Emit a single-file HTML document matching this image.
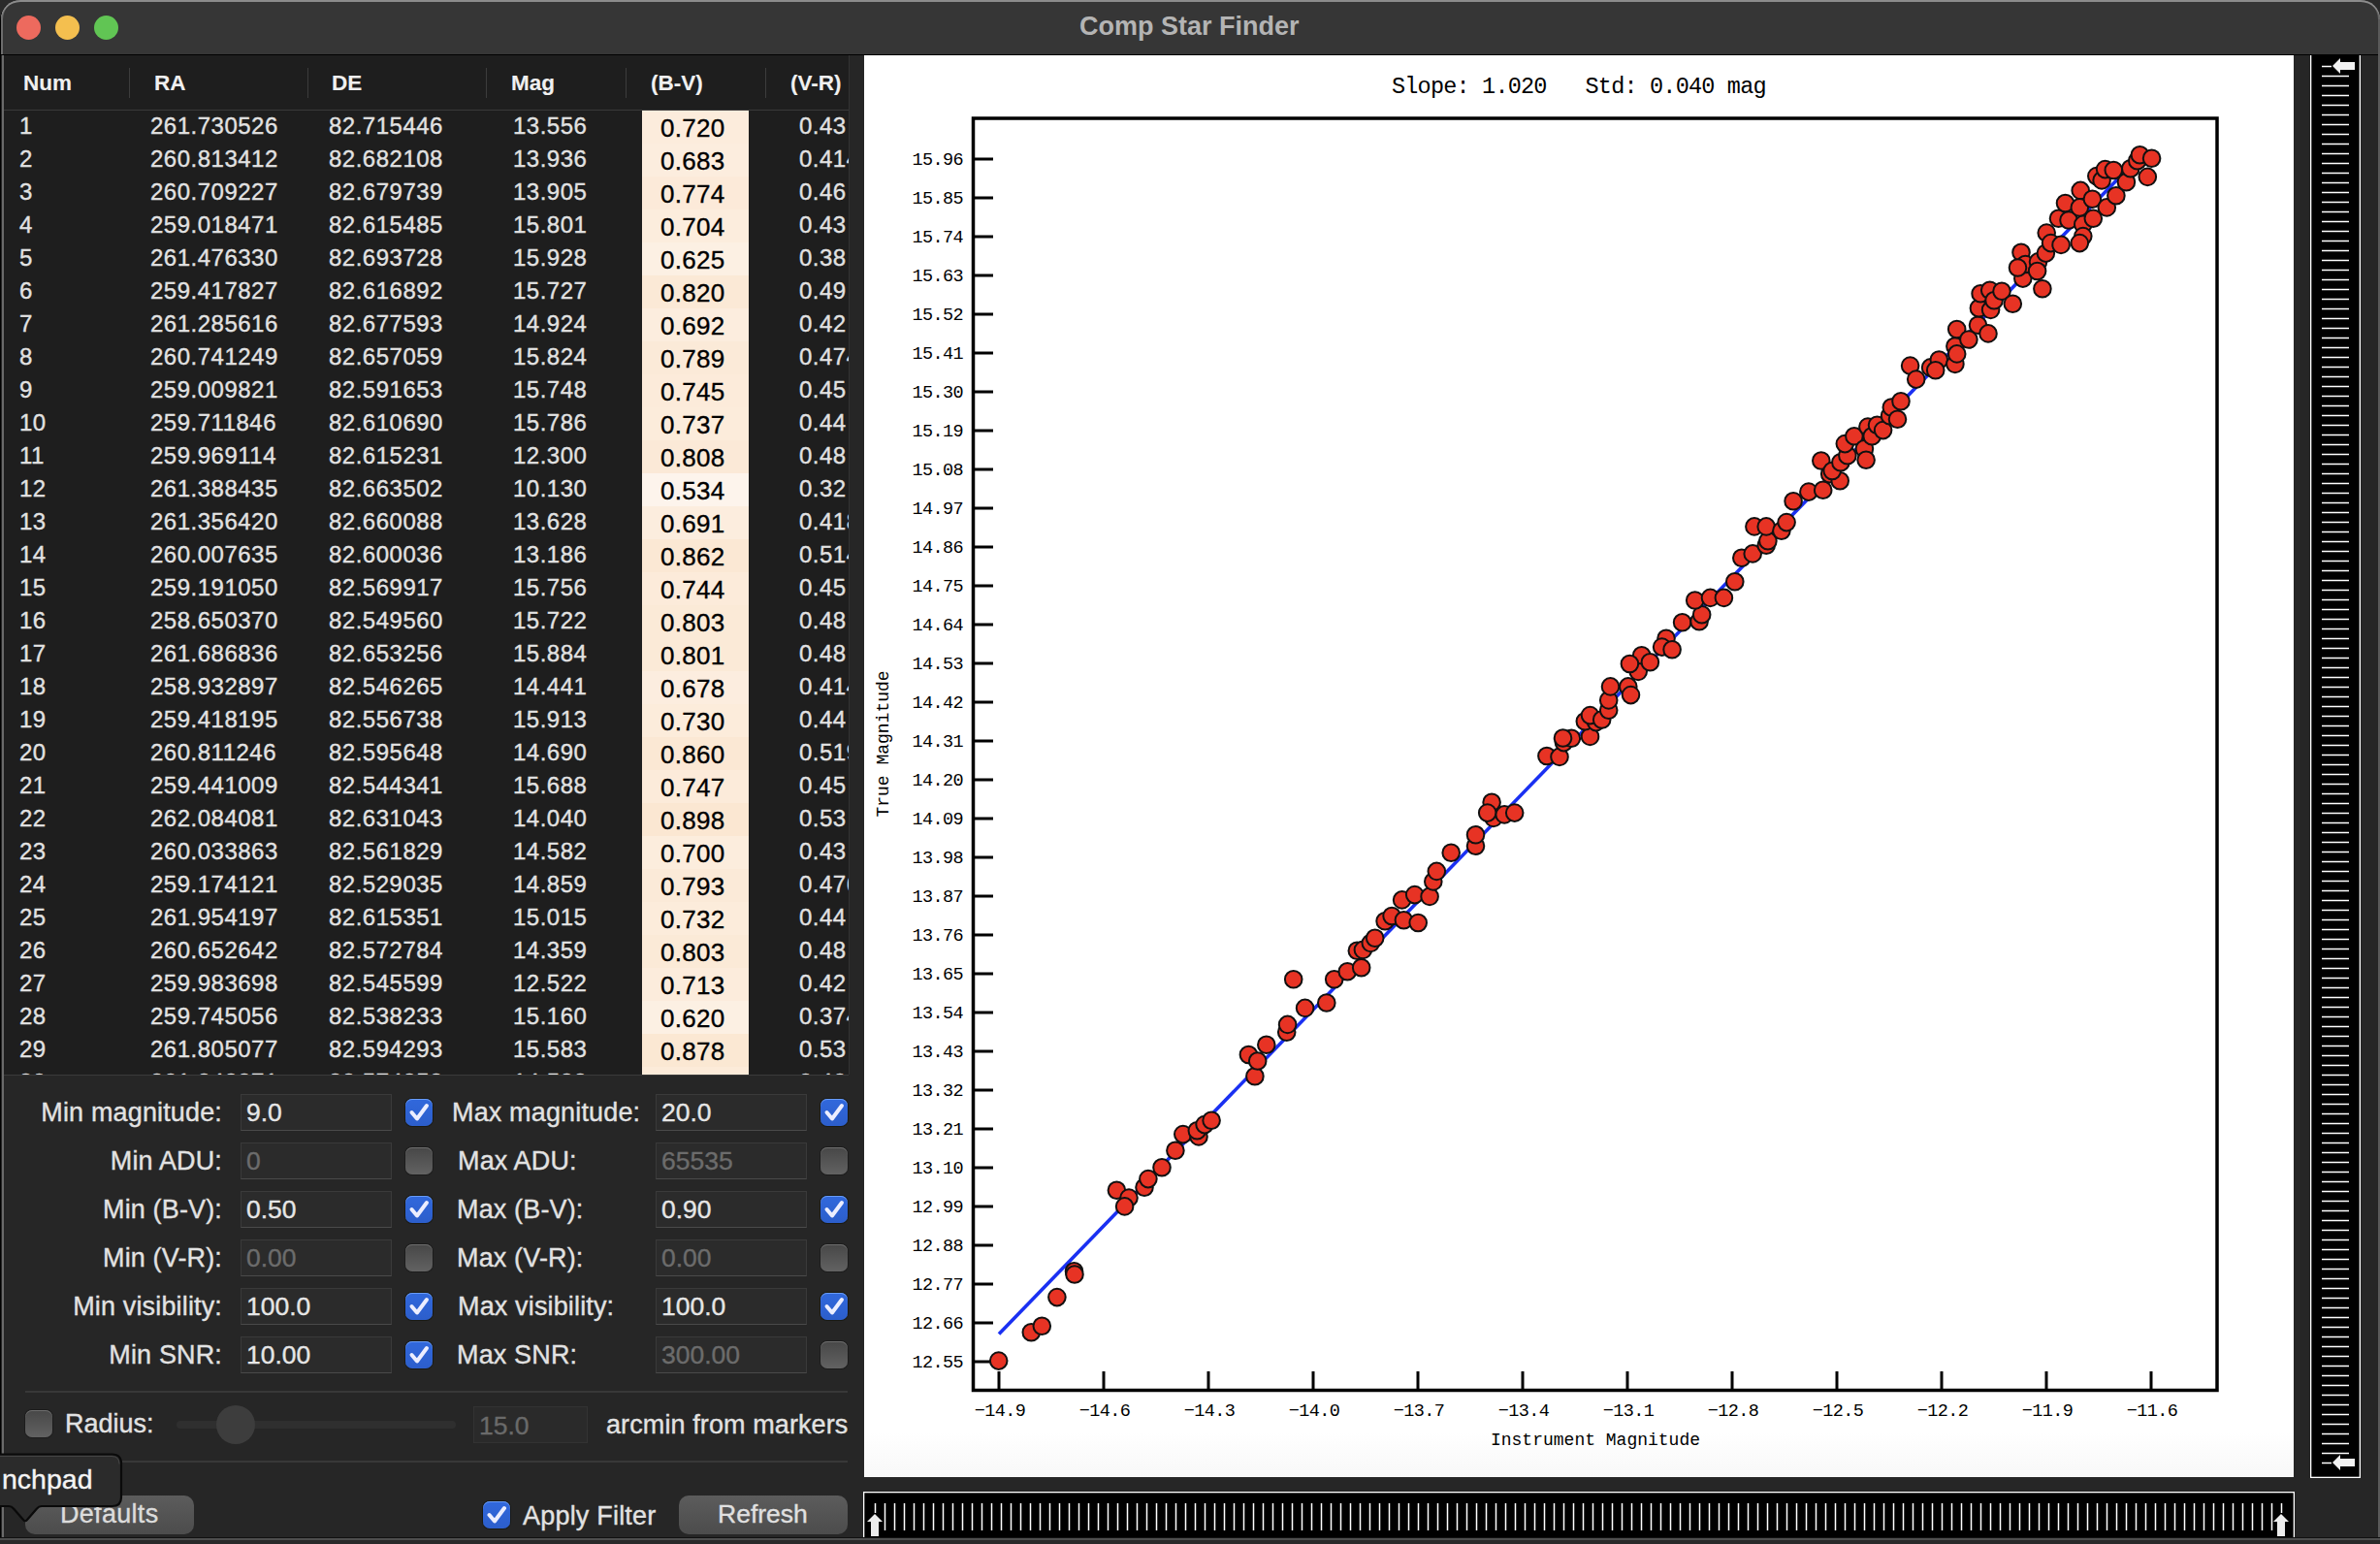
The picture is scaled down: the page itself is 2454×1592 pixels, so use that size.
<!DOCTYPE html><html><head><meta charset="utf-8"><style>
*{margin:0;padding:0;box-sizing:border-box}
html,body{width:2454px;height:1592px;overflow:hidden;background:#2a2a2a}
body{position:relative;font-family:"Liberation Sans",sans-serif}
.a{position:absolute}
.t{position:absolute;white-space:pre;line-height:1}
.m{font-family:"Liberation Mono",monospace}
.t{-webkit-text-stroke:0.35px currentColor}
</style></head><body>

<div class="a" style="left:0;top:0;width:2454px;height:1586px;background:#262626;border-radius:21px 21px 0 0;border:1px solid #000;border-bottom:none;border-right:none"></div>
<div class="a" style="left:1px;top:0;width:2453px;height:56px;background:#363636;border-radius:20px 20px 0 0;box-shadow:inset 0 2px 0 #8c8c8c, inset 2px 0 0 #6c6c6c, inset -2px 0 0 #646464"></div>
<div class="a" style="left:1px;top:56px;width:2453px;height:1px;background:#000"></div>
<div class="a" style="left:2px;top:57px;width:2px;height:1529px;background:#6a6a6a"></div>
<div class="a" style="left:17px;top:16px;width:25px;height:25px;border-radius:50%;background:#ed6a5e"></div>
<div class="a" style="left:57px;top:16px;width:25px;height:25px;border-radius:50%;background:#f4bf4f"></div>
<div class="a" style="left:97px;top:16px;width:25px;height:25px;border-radius:50%;background:#61c554"></div>
<div class="t" style="left:1113px;top:14px;font-size:27px;font-weight:bold;color:#b4b4b4;-webkit-text-stroke:0">Comp Star Finder</div>
<div class="a" style="left:4px;top:57px;width:871px;height:1051px;background:#1e1e1e;overflow:hidden">
<div class="a" style="left:0;top:56px;width:871px;height:1px;background:#3a3a3a"></div>
<div class="a" style="left:129px;top:13px;width:1px;height:31px;background:#3c3c3c"></div>
<div class="a" style="left:313px;top:13px;width:1px;height:31px;background:#3c3c3c"></div>
<div class="a" style="left:497px;top:13px;width:1px;height:31px;background:#3c3c3c"></div>
<div class="a" style="left:641px;top:13px;width:1px;height:31px;background:#3c3c3c"></div>
<div class="a" style="left:785px;top:13px;width:1px;height:31px;background:#3c3c3c"></div>
<div class="t" style="left:20px;top:17.5px;font-size:22.5px;font-weight:bold;color:#f0f0f0;-webkit-text-stroke:0.1px #f0f0f0">Num</div>
<div class="t" style="left:155px;top:17.5px;font-size:22.5px;font-weight:bold;color:#f0f0f0;-webkit-text-stroke:0.1px #f0f0f0">RA</div>
<div class="t" style="left:338px;top:17.5px;font-size:22.5px;font-weight:bold;color:#f0f0f0;-webkit-text-stroke:0.1px #f0f0f0">DE</div>
<div class="t" style="left:523px;top:17.5px;font-size:22.5px;font-weight:bold;color:#f0f0f0;-webkit-text-stroke:0.1px #f0f0f0">Mag</div>
<div class="t" style="left:667px;top:17.5px;font-size:22.5px;font-weight:bold;color:#f0f0f0;-webkit-text-stroke:0.1px #f0f0f0">(B-V)</div>
<div class="t" style="left:811px;top:17.5px;font-size:22.5px;font-weight:bold;color:#f0f0f0;-webkit-text-stroke:0.1px #f0f0f0">(V-R)</div>
<div class="a" style="left:658px;top:57px;width:110px;height:34px;background:rgb(252,236,220)"></div>
<div class="t" style="left:16px;top:61px;font-size:24px;letter-spacing:0.5px;color:#e2e2e2">1</div>
<div class="t" style="left:151px;top:61px;font-size:24px;letter-spacing:0.5px;color:#e2e2e2">261.730526</div>
<div class="t" style="left:335px;top:61px;font-size:24px;letter-spacing:0.5px;color:#e2e2e2">82.715446</div>
<div class="t" style="left:525px;top:61px;font-size:24px;letter-spacing:0.5px;color:#e2e2e2">13.556</div>
<div class="t" style="left:820px;top:61px;font-size:24px;letter-spacing:0.5px;color:#e2e2e2">0.43</div>
<div class="t" style="left:677px;top:62px;font-size:26px;letter-spacing:0.3px;color:#000">0.720</div>
<div class="a" style="left:658px;top:91px;width:110px;height:34px;background:rgb(252,237,222)"></div>
<div class="t" style="left:16px;top:95px;font-size:24px;letter-spacing:0.5px;color:#e2e2e2">2</div>
<div class="t" style="left:151px;top:95px;font-size:24px;letter-spacing:0.5px;color:#e2e2e2">260.813412</div>
<div class="t" style="left:335px;top:95px;font-size:24px;letter-spacing:0.5px;color:#e2e2e2">82.682108</div>
<div class="t" style="left:525px;top:95px;font-size:24px;letter-spacing:0.5px;color:#e2e2e2">13.936</div>
<div class="t" style="left:820px;top:95px;font-size:24px;letter-spacing:0.5px;color:#e2e2e2">0.414</div>
<div class="t" style="left:677px;top:96px;font-size:26px;letter-spacing:0.3px;color:#000">0.683</div>
<div class="a" style="left:658px;top:125px;width:110px;height:34px;background:rgb(252,234,217)"></div>
<div class="t" style="left:16px;top:129px;font-size:24px;letter-spacing:0.5px;color:#e2e2e2">3</div>
<div class="t" style="left:151px;top:129px;font-size:24px;letter-spacing:0.5px;color:#e2e2e2">260.709227</div>
<div class="t" style="left:335px;top:129px;font-size:24px;letter-spacing:0.5px;color:#e2e2e2">82.679739</div>
<div class="t" style="left:525px;top:129px;font-size:24px;letter-spacing:0.5px;color:#e2e2e2">13.905</div>
<div class="t" style="left:820px;top:129px;font-size:24px;letter-spacing:0.5px;color:#e2e2e2">0.46</div>
<div class="t" style="left:677px;top:130px;font-size:26px;letter-spacing:0.3px;color:#000">0.774</div>
<div class="a" style="left:658px;top:159px;width:110px;height:34px;background:rgb(252,237,221)"></div>
<div class="t" style="left:16px;top:163px;font-size:24px;letter-spacing:0.5px;color:#e2e2e2">4</div>
<div class="t" style="left:151px;top:163px;font-size:24px;letter-spacing:0.5px;color:#e2e2e2">259.018471</div>
<div class="t" style="left:335px;top:163px;font-size:24px;letter-spacing:0.5px;color:#e2e2e2">82.615485</div>
<div class="t" style="left:525px;top:163px;font-size:24px;letter-spacing:0.5px;color:#e2e2e2">15.801</div>
<div class="t" style="left:820px;top:163px;font-size:24px;letter-spacing:0.5px;color:#e2e2e2">0.43</div>
<div class="t" style="left:677px;top:164px;font-size:26px;letter-spacing:0.3px;color:#000">0.704</div>
<div class="a" style="left:658px;top:193px;width:110px;height:34px;background:rgb(252,240,227)"></div>
<div class="t" style="left:16px;top:197px;font-size:24px;letter-spacing:0.5px;color:#e2e2e2">5</div>
<div class="t" style="left:151px;top:197px;font-size:24px;letter-spacing:0.5px;color:#e2e2e2">261.476330</div>
<div class="t" style="left:335px;top:197px;font-size:24px;letter-spacing:0.5px;color:#e2e2e2">82.693728</div>
<div class="t" style="left:525px;top:197px;font-size:24px;letter-spacing:0.5px;color:#e2e2e2">15.928</div>
<div class="t" style="left:820px;top:197px;font-size:24px;letter-spacing:0.5px;color:#e2e2e2">0.38</div>
<div class="t" style="left:677px;top:198px;font-size:26px;letter-spacing:0.3px;color:#000">0.625</div>
<div class="a" style="left:658px;top:227px;width:110px;height:34px;background:rgb(251,233,214)"></div>
<div class="t" style="left:16px;top:231px;font-size:24px;letter-spacing:0.5px;color:#e2e2e2">6</div>
<div class="t" style="left:151px;top:231px;font-size:24px;letter-spacing:0.5px;color:#e2e2e2">259.417827</div>
<div class="t" style="left:335px;top:231px;font-size:24px;letter-spacing:0.5px;color:#e2e2e2">82.616892</div>
<div class="t" style="left:525px;top:231px;font-size:24px;letter-spacing:0.5px;color:#e2e2e2">15.727</div>
<div class="t" style="left:820px;top:231px;font-size:24px;letter-spacing:0.5px;color:#e2e2e2">0.49</div>
<div class="t" style="left:677px;top:232px;font-size:26px;letter-spacing:0.3px;color:#000">0.820</div>
<div class="a" style="left:658px;top:261px;width:110px;height:34px;background:rgb(252,237,222)"></div>
<div class="t" style="left:16px;top:265px;font-size:24px;letter-spacing:0.5px;color:#e2e2e2">7</div>
<div class="t" style="left:151px;top:265px;font-size:24px;letter-spacing:0.5px;color:#e2e2e2">261.285616</div>
<div class="t" style="left:335px;top:265px;font-size:24px;letter-spacing:0.5px;color:#e2e2e2">82.677593</div>
<div class="t" style="left:525px;top:265px;font-size:24px;letter-spacing:0.5px;color:#e2e2e2">14.924</div>
<div class="t" style="left:820px;top:265px;font-size:24px;letter-spacing:0.5px;color:#e2e2e2">0.42</div>
<div class="t" style="left:677px;top:266px;font-size:26px;letter-spacing:0.3px;color:#000">0.692</div>
<div class="a" style="left:658px;top:295px;width:110px;height:34px;background:rgb(251,234,216)"></div>
<div class="t" style="left:16px;top:299px;font-size:24px;letter-spacing:0.5px;color:#e2e2e2">8</div>
<div class="t" style="left:151px;top:299px;font-size:24px;letter-spacing:0.5px;color:#e2e2e2">260.741249</div>
<div class="t" style="left:335px;top:299px;font-size:24px;letter-spacing:0.5px;color:#e2e2e2">82.657059</div>
<div class="t" style="left:525px;top:299px;font-size:24px;letter-spacing:0.5px;color:#e2e2e2">15.824</div>
<div class="t" style="left:820px;top:299px;font-size:24px;letter-spacing:0.5px;color:#e2e2e2">0.474</div>
<div class="t" style="left:677px;top:300px;font-size:26px;letter-spacing:0.3px;color:#000">0.789</div>
<div class="a" style="left:658px;top:329px;width:110px;height:34px;background:rgb(252,235,218)"></div>
<div class="t" style="left:16px;top:333px;font-size:24px;letter-spacing:0.5px;color:#e2e2e2">9</div>
<div class="t" style="left:151px;top:333px;font-size:24px;letter-spacing:0.5px;color:#e2e2e2">259.009821</div>
<div class="t" style="left:335px;top:333px;font-size:24px;letter-spacing:0.5px;color:#e2e2e2">82.591653</div>
<div class="t" style="left:525px;top:333px;font-size:24px;letter-spacing:0.5px;color:#e2e2e2">15.748</div>
<div class="t" style="left:820px;top:333px;font-size:24px;letter-spacing:0.5px;color:#e2e2e2">0.45</div>
<div class="t" style="left:677px;top:334px;font-size:26px;letter-spacing:0.3px;color:#000">0.745</div>
<div class="a" style="left:658px;top:363px;width:110px;height:34px;background:rgb(252,236,219)"></div>
<div class="t" style="left:16px;top:367px;font-size:24px;letter-spacing:0.5px;color:#e2e2e2">10</div>
<div class="t" style="left:151px;top:367px;font-size:24px;letter-spacing:0.5px;color:#e2e2e2">259.711846</div>
<div class="t" style="left:335px;top:367px;font-size:24px;letter-spacing:0.5px;color:#e2e2e2">82.610690</div>
<div class="t" style="left:525px;top:367px;font-size:24px;letter-spacing:0.5px;color:#e2e2e2">15.786</div>
<div class="t" style="left:820px;top:367px;font-size:24px;letter-spacing:0.5px;color:#e2e2e2">0.44</div>
<div class="t" style="left:677px;top:368px;font-size:26px;letter-spacing:0.3px;color:#000">0.737</div>
<div class="a" style="left:658px;top:397px;width:110px;height:34px;background:rgb(251,233,215)"></div>
<div class="t" style="left:16px;top:401px;font-size:24px;letter-spacing:0.5px;color:#e2e2e2">11</div>
<div class="t" style="left:151px;top:401px;font-size:24px;letter-spacing:0.5px;color:#e2e2e2">259.969114</div>
<div class="t" style="left:335px;top:401px;font-size:24px;letter-spacing:0.5px;color:#e2e2e2">82.615231</div>
<div class="t" style="left:525px;top:401px;font-size:24px;letter-spacing:0.5px;color:#e2e2e2">12.300</div>
<div class="t" style="left:820px;top:401px;font-size:24px;letter-spacing:0.5px;color:#e2e2e2">0.48</div>
<div class="t" style="left:677px;top:402px;font-size:26px;letter-spacing:0.3px;color:#000">0.808</div>
<div class="a" style="left:658px;top:431px;width:110px;height:34px;background:rgb(253,244,236)"></div>
<div class="t" style="left:16px;top:435px;font-size:24px;letter-spacing:0.5px;color:#e2e2e2">12</div>
<div class="t" style="left:151px;top:435px;font-size:24px;letter-spacing:0.5px;color:#e2e2e2">261.388435</div>
<div class="t" style="left:335px;top:435px;font-size:24px;letter-spacing:0.5px;color:#e2e2e2">82.663502</div>
<div class="t" style="left:525px;top:435px;font-size:24px;letter-spacing:0.5px;color:#e2e2e2">10.130</div>
<div class="t" style="left:820px;top:435px;font-size:24px;letter-spacing:0.5px;color:#e2e2e2">0.32</div>
<div class="t" style="left:677px;top:436px;font-size:26px;letter-spacing:0.3px;color:#000">0.534</div>
<div class="a" style="left:658px;top:465px;width:110px;height:34px;background:rgb(252,237,222)"></div>
<div class="t" style="left:16px;top:469px;font-size:24px;letter-spacing:0.5px;color:#e2e2e2">13</div>
<div class="t" style="left:151px;top:469px;font-size:24px;letter-spacing:0.5px;color:#e2e2e2">261.356420</div>
<div class="t" style="left:335px;top:469px;font-size:24px;letter-spacing:0.5px;color:#e2e2e2">82.660088</div>
<div class="t" style="left:525px;top:469px;font-size:24px;letter-spacing:0.5px;color:#e2e2e2">13.628</div>
<div class="t" style="left:820px;top:469px;font-size:24px;letter-spacing:0.5px;color:#e2e2e2">0.418</div>
<div class="t" style="left:677px;top:470px;font-size:26px;letter-spacing:0.3px;color:#000">0.691</div>
<div class="a" style="left:658px;top:499px;width:110px;height:34px;background:rgb(251,232,212)"></div>
<div class="t" style="left:16px;top:503px;font-size:24px;letter-spacing:0.5px;color:#e2e2e2">14</div>
<div class="t" style="left:151px;top:503px;font-size:24px;letter-spacing:0.5px;color:#e2e2e2">260.007635</div>
<div class="t" style="left:335px;top:503px;font-size:24px;letter-spacing:0.5px;color:#e2e2e2">82.600036</div>
<div class="t" style="left:525px;top:503px;font-size:24px;letter-spacing:0.5px;color:#e2e2e2">13.186</div>
<div class="t" style="left:820px;top:503px;font-size:24px;letter-spacing:0.5px;color:#e2e2e2">0.514</div>
<div class="t" style="left:677px;top:504px;font-size:26px;letter-spacing:0.3px;color:#000">0.862</div>
<div class="a" style="left:658px;top:533px;width:110px;height:34px;background:rgb(252,235,218)"></div>
<div class="t" style="left:16px;top:537px;font-size:24px;letter-spacing:0.5px;color:#e2e2e2">15</div>
<div class="t" style="left:151px;top:537px;font-size:24px;letter-spacing:0.5px;color:#e2e2e2">259.191050</div>
<div class="t" style="left:335px;top:537px;font-size:24px;letter-spacing:0.5px;color:#e2e2e2">82.569917</div>
<div class="t" style="left:525px;top:537px;font-size:24px;letter-spacing:0.5px;color:#e2e2e2">15.756</div>
<div class="t" style="left:820px;top:537px;font-size:24px;letter-spacing:0.5px;color:#e2e2e2">0.45</div>
<div class="t" style="left:677px;top:538px;font-size:26px;letter-spacing:0.3px;color:#000">0.744</div>
<div class="a" style="left:658px;top:567px;width:110px;height:34px;background:rgb(251,234,215)"></div>
<div class="t" style="left:16px;top:571px;font-size:24px;letter-spacing:0.5px;color:#e2e2e2">16</div>
<div class="t" style="left:151px;top:571px;font-size:24px;letter-spacing:0.5px;color:#e2e2e2">258.650370</div>
<div class="t" style="left:335px;top:571px;font-size:24px;letter-spacing:0.5px;color:#e2e2e2">82.549560</div>
<div class="t" style="left:525px;top:571px;font-size:24px;letter-spacing:0.5px;color:#e2e2e2">15.722</div>
<div class="t" style="left:820px;top:571px;font-size:24px;letter-spacing:0.5px;color:#e2e2e2">0.48</div>
<div class="t" style="left:677px;top:572px;font-size:26px;letter-spacing:0.3px;color:#000">0.803</div>
<div class="a" style="left:658px;top:601px;width:110px;height:34px;background:rgb(251,234,215)"></div>
<div class="t" style="left:16px;top:605px;font-size:24px;letter-spacing:0.5px;color:#e2e2e2">17</div>
<div class="t" style="left:151px;top:605px;font-size:24px;letter-spacing:0.5px;color:#e2e2e2">261.686836</div>
<div class="t" style="left:335px;top:605px;font-size:24px;letter-spacing:0.5px;color:#e2e2e2">82.653256</div>
<div class="t" style="left:525px;top:605px;font-size:24px;letter-spacing:0.5px;color:#e2e2e2">15.884</div>
<div class="t" style="left:820px;top:605px;font-size:24px;letter-spacing:0.5px;color:#e2e2e2">0.48</div>
<div class="t" style="left:677px;top:606px;font-size:26px;letter-spacing:0.3px;color:#000">0.801</div>
<div class="a" style="left:658px;top:635px;width:110px;height:34px;background:rgb(252,237,223)"></div>
<div class="t" style="left:16px;top:639px;font-size:24px;letter-spacing:0.5px;color:#e2e2e2">18</div>
<div class="t" style="left:151px;top:639px;font-size:24px;letter-spacing:0.5px;color:#e2e2e2">258.932897</div>
<div class="t" style="left:335px;top:639px;font-size:24px;letter-spacing:0.5px;color:#e2e2e2">82.546265</div>
<div class="t" style="left:525px;top:639px;font-size:24px;letter-spacing:0.5px;color:#e2e2e2">14.441</div>
<div class="t" style="left:820px;top:639px;font-size:24px;letter-spacing:0.5px;color:#e2e2e2">0.414</div>
<div class="t" style="left:677px;top:640px;font-size:26px;letter-spacing:0.3px;color:#000">0.678</div>
<div class="a" style="left:658px;top:669px;width:110px;height:34px;background:rgb(252,236,219)"></div>
<div class="t" style="left:16px;top:673px;font-size:24px;letter-spacing:0.5px;color:#e2e2e2">19</div>
<div class="t" style="left:151px;top:673px;font-size:24px;letter-spacing:0.5px;color:#e2e2e2">259.418195</div>
<div class="t" style="left:335px;top:673px;font-size:24px;letter-spacing:0.5px;color:#e2e2e2">82.556738</div>
<div class="t" style="left:525px;top:673px;font-size:24px;letter-spacing:0.5px;color:#e2e2e2">15.913</div>
<div class="t" style="left:820px;top:673px;font-size:24px;letter-spacing:0.5px;color:#e2e2e2">0.44</div>
<div class="t" style="left:677px;top:674px;font-size:26px;letter-spacing:0.3px;color:#000">0.730</div>
<div class="a" style="left:658px;top:703px;width:110px;height:34px;background:rgb(251,232,212)"></div>
<div class="t" style="left:16px;top:707px;font-size:24px;letter-spacing:0.5px;color:#e2e2e2">20</div>
<div class="t" style="left:151px;top:707px;font-size:24px;letter-spacing:0.5px;color:#e2e2e2">260.811246</div>
<div class="t" style="left:335px;top:707px;font-size:24px;letter-spacing:0.5px;color:#e2e2e2">82.595648</div>
<div class="t" style="left:525px;top:707px;font-size:24px;letter-spacing:0.5px;color:#e2e2e2">14.690</div>
<div class="t" style="left:820px;top:707px;font-size:24px;letter-spacing:0.5px;color:#e2e2e2">0.519</div>
<div class="t" style="left:677px;top:708px;font-size:26px;letter-spacing:0.3px;color:#000">0.860</div>
<div class="a" style="left:658px;top:737px;width:110px;height:34px;background:rgb(252,235,218)"></div>
<div class="t" style="left:16px;top:741px;font-size:24px;letter-spacing:0.5px;color:#e2e2e2">21</div>
<div class="t" style="left:151px;top:741px;font-size:24px;letter-spacing:0.5px;color:#e2e2e2">259.441009</div>
<div class="t" style="left:335px;top:741px;font-size:24px;letter-spacing:0.5px;color:#e2e2e2">82.544341</div>
<div class="t" style="left:525px;top:741px;font-size:24px;letter-spacing:0.5px;color:#e2e2e2">15.688</div>
<div class="t" style="left:820px;top:741px;font-size:24px;letter-spacing:0.5px;color:#e2e2e2">0.45</div>
<div class="t" style="left:677px;top:742px;font-size:26px;letter-spacing:0.3px;color:#000">0.747</div>
<div class="a" style="left:658px;top:771px;width:110px;height:34px;background:rgb(251,231,210)"></div>
<div class="t" style="left:16px;top:775px;font-size:24px;letter-spacing:0.5px;color:#e2e2e2">22</div>
<div class="t" style="left:151px;top:775px;font-size:24px;letter-spacing:0.5px;color:#e2e2e2">262.084081</div>
<div class="t" style="left:335px;top:775px;font-size:24px;letter-spacing:0.5px;color:#e2e2e2">82.631043</div>
<div class="t" style="left:525px;top:775px;font-size:24px;letter-spacing:0.5px;color:#e2e2e2">14.040</div>
<div class="t" style="left:820px;top:775px;font-size:24px;letter-spacing:0.5px;color:#e2e2e2">0.53</div>
<div class="t" style="left:677px;top:776px;font-size:26px;letter-spacing:0.3px;color:#000">0.898</div>
<div class="a" style="left:658px;top:805px;width:110px;height:34px;background:rgb(252,237,221)"></div>
<div class="t" style="left:16px;top:809px;font-size:24px;letter-spacing:0.5px;color:#e2e2e2">23</div>
<div class="t" style="left:151px;top:809px;font-size:24px;letter-spacing:0.5px;color:#e2e2e2">260.033863</div>
<div class="t" style="left:335px;top:809px;font-size:24px;letter-spacing:0.5px;color:#e2e2e2">82.561829</div>
<div class="t" style="left:525px;top:809px;font-size:24px;letter-spacing:0.5px;color:#e2e2e2">14.582</div>
<div class="t" style="left:820px;top:809px;font-size:24px;letter-spacing:0.5px;color:#e2e2e2">0.43</div>
<div class="t" style="left:677px;top:810px;font-size:26px;letter-spacing:0.3px;color:#000">0.700</div>
<div class="a" style="left:658px;top:839px;width:110px;height:34px;background:rgb(251,234,216)"></div>
<div class="t" style="left:16px;top:843px;font-size:24px;letter-spacing:0.5px;color:#e2e2e2">24</div>
<div class="t" style="left:151px;top:843px;font-size:24px;letter-spacing:0.5px;color:#e2e2e2">259.174121</div>
<div class="t" style="left:335px;top:843px;font-size:24px;letter-spacing:0.5px;color:#e2e2e2">82.529035</div>
<div class="t" style="left:525px;top:843px;font-size:24px;letter-spacing:0.5px;color:#e2e2e2">14.859</div>
<div class="t" style="left:820px;top:843px;font-size:24px;letter-spacing:0.5px;color:#e2e2e2">0.476</div>
<div class="t" style="left:677px;top:844px;font-size:26px;letter-spacing:0.3px;color:#000">0.793</div>
<div class="a" style="left:658px;top:873px;width:110px;height:34px;background:rgb(252,236,219)"></div>
<div class="t" style="left:16px;top:877px;font-size:24px;letter-spacing:0.5px;color:#e2e2e2">25</div>
<div class="t" style="left:151px;top:877px;font-size:24px;letter-spacing:0.5px;color:#e2e2e2">261.954197</div>
<div class="t" style="left:335px;top:877px;font-size:24px;letter-spacing:0.5px;color:#e2e2e2">82.615351</div>
<div class="t" style="left:525px;top:877px;font-size:24px;letter-spacing:0.5px;color:#e2e2e2">15.015</div>
<div class="t" style="left:820px;top:877px;font-size:24px;letter-spacing:0.5px;color:#e2e2e2">0.44</div>
<div class="t" style="left:677px;top:878px;font-size:26px;letter-spacing:0.3px;color:#000">0.732</div>
<div class="a" style="left:658px;top:907px;width:110px;height:34px;background:rgb(251,234,215)"></div>
<div class="t" style="left:16px;top:911px;font-size:24px;letter-spacing:0.5px;color:#e2e2e2">26</div>
<div class="t" style="left:151px;top:911px;font-size:24px;letter-spacing:0.5px;color:#e2e2e2">260.652642</div>
<div class="t" style="left:335px;top:911px;font-size:24px;letter-spacing:0.5px;color:#e2e2e2">82.572784</div>
<div class="t" style="left:525px;top:911px;font-size:24px;letter-spacing:0.5px;color:#e2e2e2">14.359</div>
<div class="t" style="left:820px;top:911px;font-size:24px;letter-spacing:0.5px;color:#e2e2e2">0.48</div>
<div class="t" style="left:677px;top:912px;font-size:26px;letter-spacing:0.3px;color:#000">0.803</div>
<div class="a" style="left:658px;top:941px;width:110px;height:34px;background:rgb(252,236,220)"></div>
<div class="t" style="left:16px;top:945px;font-size:24px;letter-spacing:0.5px;color:#e2e2e2">27</div>
<div class="t" style="left:151px;top:945px;font-size:24px;letter-spacing:0.5px;color:#e2e2e2">259.983698</div>
<div class="t" style="left:335px;top:945px;font-size:24px;letter-spacing:0.5px;color:#e2e2e2">82.545599</div>
<div class="t" style="left:525px;top:945px;font-size:24px;letter-spacing:0.5px;color:#e2e2e2">12.522</div>
<div class="t" style="left:820px;top:945px;font-size:24px;letter-spacing:0.5px;color:#e2e2e2">0.42</div>
<div class="t" style="left:677px;top:946px;font-size:26px;letter-spacing:0.3px;color:#000">0.713</div>
<div class="a" style="left:658px;top:975px;width:110px;height:34px;background:rgb(252,240,227)"></div>
<div class="t" style="left:16px;top:979px;font-size:24px;letter-spacing:0.5px;color:#e2e2e2">28</div>
<div class="t" style="left:151px;top:979px;font-size:24px;letter-spacing:0.5px;color:#e2e2e2">259.745056</div>
<div class="t" style="left:335px;top:979px;font-size:24px;letter-spacing:0.5px;color:#e2e2e2">82.538233</div>
<div class="t" style="left:525px;top:979px;font-size:24px;letter-spacing:0.5px;color:#e2e2e2">15.160</div>
<div class="t" style="left:820px;top:979px;font-size:24px;letter-spacing:0.5px;color:#e2e2e2">0.374</div>
<div class="t" style="left:677px;top:980px;font-size:26px;letter-spacing:0.3px;color:#000">0.620</div>
<div class="a" style="left:658px;top:1009px;width:110px;height:34px;background:rgb(251,232,211)"></div>
<div class="t" style="left:16px;top:1013px;font-size:24px;letter-spacing:0.5px;color:#e2e2e2">29</div>
<div class="t" style="left:151px;top:1013px;font-size:24px;letter-spacing:0.5px;color:#e2e2e2">261.805077</div>
<div class="t" style="left:335px;top:1013px;font-size:24px;letter-spacing:0.5px;color:#e2e2e2">82.594293</div>
<div class="t" style="left:525px;top:1013px;font-size:24px;letter-spacing:0.5px;color:#e2e2e2">15.583</div>
<div class="t" style="left:820px;top:1013px;font-size:24px;letter-spacing:0.5px;color:#e2e2e2">0.53</div>
<div class="t" style="left:677px;top:1014px;font-size:26px;letter-spacing:0.3px;color:#000">0.878</div>
<div class="a" style="left:658px;top:1043px;width:110px;height:34px;background:rgb(252,235,217)"></div>
<div class="t" style="left:16px;top:1047px;font-size:24px;letter-spacing:0.5px;color:#e2e2e2">30</div>
<div class="t" style="left:151px;top:1047px;font-size:24px;letter-spacing:0.5px;color:#e2e2e2">261.848871</div>
<div class="t" style="left:335px;top:1047px;font-size:24px;letter-spacing:0.5px;color:#e2e2e2">82.574852</div>
<div class="t" style="left:525px;top:1047px;font-size:24px;letter-spacing:0.5px;color:#e2e2e2">14.532</div>
<div class="t" style="left:820px;top:1047px;font-size:24px;letter-spacing:0.5px;color:#e2e2e2">0.46</div>
<div class="t" style="left:677px;top:1048px;font-size:26px;letter-spacing:0.3px;color:#000">0.766</div>
</div>
<div class="a" style="left:4px;top:1108px;width:871px;height:1px;background:#3a3a3a"></div>
<div class="a" style="left:875px;top:57px;width:1px;height:1051px;background:#333"></div>
<div class="t" style="left:0;width:229px;text-align:right;top:1134px;font-size:27px;letter-spacing:0.15px;color:#e2e2e2">Min magnitude:</div>
<div class="a" style="left:248px;top:1128px;width:156px;height:38px;background:#2b2b2b;border:1px solid #3a3a3a;border-bottom-color:#4a4a4a"></div>
<div class="t" style="left:254px;top:1134px;font-size:26.5px;color:#e6e6e6">9.0</div>
<div class="a" style="left:418px;top:1133px;width:28px;height:28px;border-radius:7px;background:linear-gradient(#3168dc,#2c5ecb);box-shadow:inset 0 1px 0 #6a9cf5, 0 0 0 1px #1a1a14"><svg width="28" height="28" style="position:absolute;left:0;top:0"><path d="M6.5 14 L12 20.5 L22 7" stroke="#eceeff" stroke-width="4" fill="none" stroke-linecap="round" stroke-linejoin="round"/></svg></div>
<div class="t" style="left:466px;top:1134px;font-size:27px;letter-spacing:0.15px;color:#e2e2e2">Max magnitude:</div>
<div class="a" style="left:676px;top:1128px;width:156px;height:38px;background:#2b2b2b;border:1px solid #3a3a3a;border-bottom-color:#4a4a4a"></div>
<div class="t" style="left:682px;top:1134px;font-size:26.5px;color:#e6e6e6">20.0</div>
<div class="a" style="left:846px;top:1133px;width:28px;height:28px;border-radius:7px;background:linear-gradient(#3168dc,#2c5ecb);box-shadow:inset 0 1px 0 #6a9cf5, 0 0 0 1px #1a1a14"><svg width="28" height="28" style="position:absolute;left:0;top:0"><path d="M6.5 14 L12 20.5 L22 7" stroke="#eceeff" stroke-width="4" fill="none" stroke-linecap="round" stroke-linejoin="round"/></svg></div>
<div class="t" style="left:0;width:229px;text-align:right;top:1184px;font-size:27px;letter-spacing:0.15px;color:#e2e2e2">Min ADU:</div>
<div class="a" style="left:248px;top:1178px;width:156px;height:38px;background:#2b2b2b;border:1px solid #3a3a3a;border-bottom-color:#4a4a4a"></div>
<div class="t" style="left:254px;top:1184px;font-size:26.5px;color:#6c6c6c">0</div>
<div class="a" style="left:418px;top:1183px;width:28px;height:28px;border-radius:7px;background:linear-gradient(#474747,#626262);box-shadow:inset 0 1px 0 #6e6e6e, 0 0 0 1px #1c1c1c"></div>
<div class="t" style="left:472px;top:1184px;font-size:27px;letter-spacing:0.15px;color:#e2e2e2">Max ADU:</div>
<div class="a" style="left:676px;top:1178px;width:156px;height:38px;background:#2b2b2b;border:1px solid #3a3a3a;border-bottom-color:#4a4a4a"></div>
<div class="t" style="left:682px;top:1184px;font-size:26.5px;color:#6c6c6c">65535</div>
<div class="a" style="left:846px;top:1183px;width:28px;height:28px;border-radius:7px;background:linear-gradient(#474747,#626262);box-shadow:inset 0 1px 0 #6e6e6e, 0 0 0 1px #1c1c1c"></div>
<div class="t" style="left:0;width:229px;text-align:right;top:1234px;font-size:27px;letter-spacing:0.15px;color:#e2e2e2">Min (B-V):</div>
<div class="a" style="left:248px;top:1228px;width:156px;height:38px;background:#2b2b2b;border:1px solid #3a3a3a;border-bottom-color:#4a4a4a"></div>
<div class="t" style="left:254px;top:1234px;font-size:26.5px;color:#e6e6e6">0.50</div>
<div class="a" style="left:418px;top:1233px;width:28px;height:28px;border-radius:7px;background:linear-gradient(#3168dc,#2c5ecb);box-shadow:inset 0 1px 0 #6a9cf5, 0 0 0 1px #1a1a14"><svg width="28" height="28" style="position:absolute;left:0;top:0"><path d="M6.5 14 L12 20.5 L22 7" stroke="#eceeff" stroke-width="4" fill="none" stroke-linecap="round" stroke-linejoin="round"/></svg></div>
<div class="t" style="left:471px;top:1234px;font-size:27px;letter-spacing:0.15px;color:#e2e2e2">Max (B-V):</div>
<div class="a" style="left:676px;top:1228px;width:156px;height:38px;background:#2b2b2b;border:1px solid #3a3a3a;border-bottom-color:#4a4a4a"></div>
<div class="t" style="left:682px;top:1234px;font-size:26.5px;color:#e6e6e6">0.90</div>
<div class="a" style="left:846px;top:1233px;width:28px;height:28px;border-radius:7px;background:linear-gradient(#3168dc,#2c5ecb);box-shadow:inset 0 1px 0 #6a9cf5, 0 0 0 1px #1a1a14"><svg width="28" height="28" style="position:absolute;left:0;top:0"><path d="M6.5 14 L12 20.5 L22 7" stroke="#eceeff" stroke-width="4" fill="none" stroke-linecap="round" stroke-linejoin="round"/></svg></div>
<div class="t" style="left:0;width:229px;text-align:right;top:1284px;font-size:27px;letter-spacing:0.15px;color:#e2e2e2">Min (V-R):</div>
<div class="a" style="left:248px;top:1278px;width:156px;height:38px;background:#2b2b2b;border:1px solid #3a3a3a;border-bottom-color:#4a4a4a"></div>
<div class="t" style="left:254px;top:1284px;font-size:26.5px;color:#6c6c6c">0.00</div>
<div class="a" style="left:418px;top:1283px;width:28px;height:28px;border-radius:7px;background:linear-gradient(#474747,#626262);box-shadow:inset 0 1px 0 #6e6e6e, 0 0 0 1px #1c1c1c"></div>
<div class="t" style="left:471px;top:1284px;font-size:27px;letter-spacing:0.15px;color:#e2e2e2">Max (V-R):</div>
<div class="a" style="left:676px;top:1278px;width:156px;height:38px;background:#2b2b2b;border:1px solid #3a3a3a;border-bottom-color:#4a4a4a"></div>
<div class="t" style="left:682px;top:1284px;font-size:26.5px;color:#6c6c6c">0.00</div>
<div class="a" style="left:846px;top:1283px;width:28px;height:28px;border-radius:7px;background:linear-gradient(#474747,#626262);box-shadow:inset 0 1px 0 #6e6e6e, 0 0 0 1px #1c1c1c"></div>
<div class="t" style="left:0;width:229px;text-align:right;top:1334px;font-size:27px;letter-spacing:0.15px;color:#e2e2e2">Min visibility:</div>
<div class="a" style="left:248px;top:1328px;width:156px;height:38px;background:#2b2b2b;border:1px solid #3a3a3a;border-bottom-color:#4a4a4a"></div>
<div class="t" style="left:254px;top:1334px;font-size:26.5px;color:#e6e6e6">100.0</div>
<div class="a" style="left:418px;top:1333px;width:28px;height:28px;border-radius:7px;background:linear-gradient(#3168dc,#2c5ecb);box-shadow:inset 0 1px 0 #6a9cf5, 0 0 0 1px #1a1a14"><svg width="28" height="28" style="position:absolute;left:0;top:0"><path d="M6.5 14 L12 20.5 L22 7" stroke="#eceeff" stroke-width="4" fill="none" stroke-linecap="round" stroke-linejoin="round"/></svg></div>
<div class="t" style="left:472px;top:1334px;font-size:27px;letter-spacing:0.15px;color:#e2e2e2">Max visibility:</div>
<div class="a" style="left:676px;top:1328px;width:156px;height:38px;background:#2b2b2b;border:1px solid #3a3a3a;border-bottom-color:#4a4a4a"></div>
<div class="t" style="left:682px;top:1334px;font-size:26.5px;color:#e6e6e6">100.0</div>
<div class="a" style="left:846px;top:1333px;width:28px;height:28px;border-radius:7px;background:linear-gradient(#3168dc,#2c5ecb);box-shadow:inset 0 1px 0 #6a9cf5, 0 0 0 1px #1a1a14"><svg width="28" height="28" style="position:absolute;left:0;top:0"><path d="M6.5 14 L12 20.5 L22 7" stroke="#eceeff" stroke-width="4" fill="none" stroke-linecap="round" stroke-linejoin="round"/></svg></div>
<div class="t" style="left:0;width:229px;text-align:right;top:1384px;font-size:27px;letter-spacing:0.15px;color:#e2e2e2">Min SNR:</div>
<div class="a" style="left:248px;top:1378px;width:156px;height:38px;background:#2b2b2b;border:1px solid #3a3a3a;border-bottom-color:#4a4a4a"></div>
<div class="t" style="left:254px;top:1384px;font-size:26.5px;color:#e6e6e6">10.00</div>
<div class="a" style="left:418px;top:1383px;width:28px;height:28px;border-radius:7px;background:linear-gradient(#3168dc,#2c5ecb);box-shadow:inset 0 1px 0 #6a9cf5, 0 0 0 1px #1a1a14"><svg width="28" height="28" style="position:absolute;left:0;top:0"><path d="M6.5 14 L12 20.5 L22 7" stroke="#eceeff" stroke-width="4" fill="none" stroke-linecap="round" stroke-linejoin="round"/></svg></div>
<div class="t" style="left:471px;top:1384px;font-size:27px;letter-spacing:0.15px;color:#e2e2e2">Max SNR:</div>
<div class="a" style="left:676px;top:1378px;width:156px;height:38px;background:#2b2b2b;border:1px solid #3a3a3a;border-bottom-color:#4a4a4a"></div>
<div class="t" style="left:682px;top:1384px;font-size:26.5px;color:#6c6c6c">300.00</div>
<div class="a" style="left:846px;top:1383px;width:28px;height:28px;border-radius:7px;background:linear-gradient(#474747,#626262);box-shadow:inset 0 1px 0 #6e6e6e, 0 0 0 1px #1c1c1c"></div>
<div class="a" style="left:26px;top:1434px;width:848px;height:2px;background:#383838"></div>
<div class="a" style="left:26px;top:1454px;width:28px;height:28px;border-radius:7px;background:linear-gradient(#474747,#626262);box-shadow:inset 0 1px 0 #6e6e6e, 0 0 0 1px #1c1c1c"></div>
<div class="t" style="left:67px;top:1455px;font-size:27px;color:#e2e2e2">Radius:</div>
<div class="a" style="left:182px;top:1465px;width:288px;height:8px;border-radius:4px;background:#2f2f2f"></div>
<div class="a" style="left:223px;top:1449px;width:40px;height:40px;border-radius:50%;background:#3d3d3d"></div>
<div class="a" style="left:488px;top:1450px;width:118px;height:38px;background:#2a2a2a;border:1px solid #333"></div>
<div class="t" style="left:494px;top:1457px;font-size:26.5px;color:#6a6a6a">15.0</div>
<div class="t" style="left:625px;top:1456px;font-size:27px;letter-spacing:0.1px;color:#e2e2e2">arcmin from markers</div>
<div class="a" style="left:26px;top:1506px;width:848px;height:2px;background:#383838"></div>
<div class="a" style="left:26px;top:1542px;width:174px;height:40px;border-radius:10px;background:linear-gradient(#5c5c5c,#4c4c4c)"></div>
<div class="t" style="left:62px;top:1547.5px;font-size:27px;letter-spacing:0.3px;color:#dcdcdc">Defaults</div>
<div class="a" style="left:700px;top:1542px;width:174px;height:40px;border-radius:10px;background:linear-gradient(#5c5c5c,#4c4c4c)"></div>
<div class="t" style="left:740px;top:1548px;font-size:26.5px;color:#e0e0e0">Refresh</div>
<div class="a" style="left:498px;top:1548px;width:28px;height:28px;border-radius:7px;background:linear-gradient(#3168dc,#2c5ecb);box-shadow:inset 0 1px 0 #6a9cf5, 0 0 0 1px #1a1a14"><svg width="28" height="28" style="position:absolute;left:0;top:0"><path d="M6.5 14 L12 20.5 L22 7" stroke="#eceeff" stroke-width="4" fill="none" stroke-linecap="round" stroke-linejoin="round"/></svg></div>
<div class="t" style="left:539px;top:1549.5px;font-size:27px;letter-spacing:0.2px;color:#e2e2e2">Apply Filter</div>
<svg class="a" style="left:0;top:0" width="200" height="1592"><path d="M-5 1499.5 H115.5 Q125 1499.5 125 1509 V1544 Q125 1553 115.5 1553 H43 Q40 1553 38 1555.5 L28 1567 Q26 1569.5 24 1567 L14 1555.5 Q12 1553 9 1553 H-5 Z" fill="#2b2b2b" stroke="#0a0a0a" stroke-width="2.2"/><path d="M-5 1501.5 H115 Q123 1501.5 123 1509.5" fill="none" stroke="#454545" stroke-width="1"/></svg>
<div class="t" style="left:2px;top:1511px;font-size:28.5px;color:#f4f4f4">nchpad</div>
<div class="a" style="left:876px;top:57px;width:1576px;height:1529px;background:#262626"></div>
<div class="a" style="left:891px;top:57px;width:1474px;height:1466px;background:linear-gradient(#fff 0,#fff 1420px,#f8f8f8 1466px)"></div>
<svg class="a" style="left:0;top:0" width="2454" height="1592" viewBox="0 0 2454 1592">
<text xml:space="preserve" x="1435" y="96" font-family="Liberation Mono" font-size="23.5" letter-spacing="-0.8" fill="#000">Slope: 1.020   Std: 0.040 mag</text>
<line x1="1030" y1="1375.5" x2="2190" y2="178" stroke="#1a30f2" stroke-width="3.6"/>
<rect x="1003.5" y="122" width="1282.5" height="1311.5" fill="none" stroke="#000" stroke-width="3.5"/>
<line x1="1005" y1="164" x2="1024" y2="164" stroke="#000" stroke-width="3"/>
<text x="993" y="170" text-anchor="end" font-family="Liberation Mono" font-size="18.5" letter-spacing="-0.6" fill="#000">15.96</text>
<line x1="1005" y1="204" x2="1024" y2="204" stroke="#000" stroke-width="3"/>
<text x="993" y="210" text-anchor="end" font-family="Liberation Mono" font-size="18.5" letter-spacing="-0.6" fill="#000">15.85</text>
<line x1="1005" y1="244" x2="1024" y2="244" stroke="#000" stroke-width="3"/>
<text x="993" y="250" text-anchor="end" font-family="Liberation Mono" font-size="18.5" letter-spacing="-0.6" fill="#000">15.74</text>
<line x1="1005" y1="284" x2="1024" y2="284" stroke="#000" stroke-width="3"/>
<text x="993" y="290" text-anchor="end" font-family="Liberation Mono" font-size="18.5" letter-spacing="-0.6" fill="#000">15.63</text>
<line x1="1005" y1="324" x2="1024" y2="324" stroke="#000" stroke-width="3"/>
<text x="993" y="330" text-anchor="end" font-family="Liberation Mono" font-size="18.5" letter-spacing="-0.6" fill="#000">15.52</text>
<line x1="1005" y1="364" x2="1024" y2="364" stroke="#000" stroke-width="3"/>
<text x="993" y="370" text-anchor="end" font-family="Liberation Mono" font-size="18.5" letter-spacing="-0.6" fill="#000">15.41</text>
<line x1="1005" y1="404" x2="1024" y2="404" stroke="#000" stroke-width="3"/>
<text x="993" y="410" text-anchor="end" font-family="Liberation Mono" font-size="18.5" letter-spacing="-0.6" fill="#000">15.30</text>
<line x1="1005" y1="444" x2="1024" y2="444" stroke="#000" stroke-width="3"/>
<text x="993" y="450" text-anchor="end" font-family="Liberation Mono" font-size="18.5" letter-spacing="-0.6" fill="#000">15.19</text>
<line x1="1005" y1="484" x2="1024" y2="484" stroke="#000" stroke-width="3"/>
<text x="993" y="490" text-anchor="end" font-family="Liberation Mono" font-size="18.5" letter-spacing="-0.6" fill="#000">15.08</text>
<line x1="1005" y1="524" x2="1024" y2="524" stroke="#000" stroke-width="3"/>
<text x="993" y="530" text-anchor="end" font-family="Liberation Mono" font-size="18.5" letter-spacing="-0.6" fill="#000">14.97</text>
<line x1="1005" y1="564" x2="1024" y2="564" stroke="#000" stroke-width="3"/>
<text x="993" y="570" text-anchor="end" font-family="Liberation Mono" font-size="18.5" letter-spacing="-0.6" fill="#000">14.86</text>
<line x1="1005" y1="604" x2="1024" y2="604" stroke="#000" stroke-width="3"/>
<text x="993" y="610" text-anchor="end" font-family="Liberation Mono" font-size="18.5" letter-spacing="-0.6" fill="#000">14.75</text>
<line x1="1005" y1="644" x2="1024" y2="644" stroke="#000" stroke-width="3"/>
<text x="993" y="650" text-anchor="end" font-family="Liberation Mono" font-size="18.5" letter-spacing="-0.6" fill="#000">14.64</text>
<line x1="1005" y1="684" x2="1024" y2="684" stroke="#000" stroke-width="3"/>
<text x="993" y="690" text-anchor="end" font-family="Liberation Mono" font-size="18.5" letter-spacing="-0.6" fill="#000">14.53</text>
<line x1="1005" y1="724" x2="1024" y2="724" stroke="#000" stroke-width="3"/>
<text x="993" y="730" text-anchor="end" font-family="Liberation Mono" font-size="18.5" letter-spacing="-0.6" fill="#000">14.42</text>
<line x1="1005" y1="764" x2="1024" y2="764" stroke="#000" stroke-width="3"/>
<text x="993" y="770" text-anchor="end" font-family="Liberation Mono" font-size="18.5" letter-spacing="-0.6" fill="#000">14.31</text>
<line x1="1005" y1="804" x2="1024" y2="804" stroke="#000" stroke-width="3"/>
<text x="993" y="810" text-anchor="end" font-family="Liberation Mono" font-size="18.5" letter-spacing="-0.6" fill="#000">14.20</text>
<line x1="1005" y1="844" x2="1024" y2="844" stroke="#000" stroke-width="3"/>
<text x="993" y="850" text-anchor="end" font-family="Liberation Mono" font-size="18.5" letter-spacing="-0.6" fill="#000">14.09</text>
<line x1="1005" y1="884" x2="1024" y2="884" stroke="#000" stroke-width="3"/>
<text x="993" y="890" text-anchor="end" font-family="Liberation Mono" font-size="18.5" letter-spacing="-0.6" fill="#000">13.98</text>
<line x1="1005" y1="924" x2="1024" y2="924" stroke="#000" stroke-width="3"/>
<text x="993" y="930" text-anchor="end" font-family="Liberation Mono" font-size="18.5" letter-spacing="-0.6" fill="#000">13.87</text>
<line x1="1005" y1="964" x2="1024" y2="964" stroke="#000" stroke-width="3"/>
<text x="993" y="970" text-anchor="end" font-family="Liberation Mono" font-size="18.5" letter-spacing="-0.6" fill="#000">13.76</text>
<line x1="1005" y1="1004" x2="1024" y2="1004" stroke="#000" stroke-width="3"/>
<text x="993" y="1010" text-anchor="end" font-family="Liberation Mono" font-size="18.5" letter-spacing="-0.6" fill="#000">13.65</text>
<line x1="1005" y1="1044" x2="1024" y2="1044" stroke="#000" stroke-width="3"/>
<text x="993" y="1050" text-anchor="end" font-family="Liberation Mono" font-size="18.5" letter-spacing="-0.6" fill="#000">13.54</text>
<line x1="1005" y1="1084" x2="1024" y2="1084" stroke="#000" stroke-width="3"/>
<text x="993" y="1090" text-anchor="end" font-family="Liberation Mono" font-size="18.5" letter-spacing="-0.6" fill="#000">13.43</text>
<line x1="1005" y1="1124" x2="1024" y2="1124" stroke="#000" stroke-width="3"/>
<text x="993" y="1130" text-anchor="end" font-family="Liberation Mono" font-size="18.5" letter-spacing="-0.6" fill="#000">13.32</text>
<line x1="1005" y1="1164" x2="1024" y2="1164" stroke="#000" stroke-width="3"/>
<text x="993" y="1170" text-anchor="end" font-family="Liberation Mono" font-size="18.5" letter-spacing="-0.6" fill="#000">13.21</text>
<line x1="1005" y1="1204" x2="1024" y2="1204" stroke="#000" stroke-width="3"/>
<text x="993" y="1210" text-anchor="end" font-family="Liberation Mono" font-size="18.5" letter-spacing="-0.6" fill="#000">13.10</text>
<line x1="1005" y1="1244" x2="1024" y2="1244" stroke="#000" stroke-width="3"/>
<text x="993" y="1250" text-anchor="end" font-family="Liberation Mono" font-size="18.5" letter-spacing="-0.6" fill="#000">12.99</text>
<line x1="1005" y1="1284" x2="1024" y2="1284" stroke="#000" stroke-width="3"/>
<text x="993" y="1290" text-anchor="end" font-family="Liberation Mono" font-size="18.5" letter-spacing="-0.6" fill="#000">12.88</text>
<line x1="1005" y1="1324" x2="1024" y2="1324" stroke="#000" stroke-width="3"/>
<text x="993" y="1330" text-anchor="end" font-family="Liberation Mono" font-size="18.5" letter-spacing="-0.6" fill="#000">12.77</text>
<line x1="1005" y1="1364" x2="1024" y2="1364" stroke="#000" stroke-width="3"/>
<text x="993" y="1370" text-anchor="end" font-family="Liberation Mono" font-size="18.5" letter-spacing="-0.6" fill="#000">12.66</text>
<line x1="1005" y1="1404" x2="1024" y2="1404" stroke="#000" stroke-width="3"/>
<text x="993" y="1410" text-anchor="end" font-family="Liberation Mono" font-size="18.5" letter-spacing="-0.6" fill="#000">12.55</text>
<line x1="1030" y1="1414" x2="1030" y2="1433" stroke="#000" stroke-width="3"/>
<text x="1031" y="1460" text-anchor="middle" font-family="Liberation Mono" font-size="18.5" letter-spacing="-0.6" fill="#000">−14.9</text>
<line x1="1138" y1="1414" x2="1138" y2="1433" stroke="#000" stroke-width="3"/>
<text x="1139" y="1460" text-anchor="middle" font-family="Liberation Mono" font-size="18.5" letter-spacing="-0.6" fill="#000">−14.6</text>
<line x1="1246" y1="1414" x2="1246" y2="1433" stroke="#000" stroke-width="3"/>
<text x="1247" y="1460" text-anchor="middle" font-family="Liberation Mono" font-size="18.5" letter-spacing="-0.6" fill="#000">−14.3</text>
<line x1="1354" y1="1414" x2="1354" y2="1433" stroke="#000" stroke-width="3"/>
<text x="1355" y="1460" text-anchor="middle" font-family="Liberation Mono" font-size="18.5" letter-spacing="-0.6" fill="#000">−14.0</text>
<line x1="1462" y1="1414" x2="1462" y2="1433" stroke="#000" stroke-width="3"/>
<text x="1463" y="1460" text-anchor="middle" font-family="Liberation Mono" font-size="18.5" letter-spacing="-0.6" fill="#000">−13.7</text>
<line x1="1570" y1="1414" x2="1570" y2="1433" stroke="#000" stroke-width="3"/>
<text x="1571" y="1460" text-anchor="middle" font-family="Liberation Mono" font-size="18.5" letter-spacing="-0.6" fill="#000">−13.4</text>
<line x1="1678" y1="1414" x2="1678" y2="1433" stroke="#000" stroke-width="3"/>
<text x="1679" y="1460" text-anchor="middle" font-family="Liberation Mono" font-size="18.5" letter-spacing="-0.6" fill="#000">−13.1</text>
<line x1="1786" y1="1414" x2="1786" y2="1433" stroke="#000" stroke-width="3"/>
<text x="1787" y="1460" text-anchor="middle" font-family="Liberation Mono" font-size="18.5" letter-spacing="-0.6" fill="#000">−12.8</text>
<line x1="1894" y1="1414" x2="1894" y2="1433" stroke="#000" stroke-width="3"/>
<text x="1895" y="1460" text-anchor="middle" font-family="Liberation Mono" font-size="18.5" letter-spacing="-0.6" fill="#000">−12.5</text>
<line x1="2002" y1="1414" x2="2002" y2="1433" stroke="#000" stroke-width="3"/>
<text x="2003" y="1460" text-anchor="middle" font-family="Liberation Mono" font-size="18.5" letter-spacing="-0.6" fill="#000">−12.2</text>
<line x1="2110" y1="1414" x2="2110" y2="1433" stroke="#000" stroke-width="3"/>
<text x="2111" y="1460" text-anchor="middle" font-family="Liberation Mono" font-size="18.5" letter-spacing="-0.6" fill="#000">−11.9</text>
<line x1="2218" y1="1414" x2="2218" y2="1433" stroke="#000" stroke-width="3"/>
<text x="2219" y="1460" text-anchor="middle" font-family="Liberation Mono" font-size="18.5" letter-spacing="-0.6" fill="#000">−11.6</text>
<text x="1645" y="1490" text-anchor="middle" font-family="Liberation Mono" font-size="18" letter-spacing="0" fill="#000">Instrument Magnitude</text>
<text transform="translate(916,767) rotate(-90)" text-anchor="middle" font-family="Liberation Mono" font-size="18" letter-spacing="0" fill="#000">True Magnitude</text>
<g fill="#e73324" stroke="#111" stroke-width="2">
<circle cx="1029.7" cy="1403.1" r="8.8"/>
<circle cx="1063.3" cy="1373.8" r="8.8"/>
<circle cx="1074.3" cy="1367.3" r="8.8"/>
<circle cx="1089.9" cy="1337.6" r="8.8"/>
<circle cx="1107.5" cy="1310.8" r="8.8"/>
<circle cx="1108.0" cy="1314.0" r="8.8"/>
<circle cx="1151.4" cy="1227.3" r="8.8"/>
<circle cx="1164.0" cy="1235.1" r="8.8"/>
<circle cx="1159.6" cy="1243.9" r="8.8"/>
<circle cx="1180.0" cy="1224.3" r="8.8"/>
<circle cx="1183.9" cy="1215.6" r="8.8"/>
<circle cx="1198.0" cy="1203.7" r="8.8"/>
<circle cx="1211.9" cy="1186.2" r="8.8"/>
<circle cx="1219.8" cy="1169.6" r="8.8"/>
<circle cx="1236.0" cy="1171.9" r="8.8"/>
<circle cx="1234.3" cy="1165.7" r="8.8"/>
<circle cx="1242.1" cy="1159.6" r="8.8"/>
<circle cx="1249.1" cy="1155.2" r="8.8"/>
<circle cx="1293.9" cy="1109.7" r="8.8"/>
<circle cx="1287.4" cy="1087.5" r="8.8"/>
<circle cx="1296.7" cy="1094.0" r="8.8"/>
<circle cx="1305.8" cy="1077.3" r="8.8"/>
<circle cx="1326.7" cy="1064.2" r="8.8"/>
<circle cx="1327.6" cy="1056.4" r="8.8"/>
<circle cx="1345.6" cy="1039.4" r="8.8"/>
<circle cx="1333.7" cy="1009.7" r="8.8"/>
<circle cx="1367.8" cy="1034.0" r="8.8"/>
<circle cx="1375.7" cy="1009.7" r="8.8"/>
<circle cx="1389.3" cy="1001.8" r="8.8"/>
<circle cx="1403.7" cy="997.8" r="8.8"/>
<circle cx="1399.3" cy="980.3" r="8.8"/>
<circle cx="1405.4" cy="979.4" r="8.8"/>
<circle cx="1413.3" cy="972.4" r="8.8"/>
<circle cx="1417.7" cy="967.2" r="8.8"/>
<circle cx="1428.1" cy="949.7" r="8.8"/>
<circle cx="1435.1" cy="944.5" r="8.8"/>
<circle cx="1447.4" cy="948.8" r="8.8"/>
<circle cx="1462.2" cy="951.5" r="8.8"/>
<circle cx="1445.6" cy="927.9" r="8.8"/>
<circle cx="1458.7" cy="922.6" r="8.8"/>
<circle cx="1474.1" cy="924.4" r="8.8"/>
<circle cx="1477.8" cy="908.9" r="8.8"/>
<circle cx="1481.3" cy="898.4" r="8.8"/>
<circle cx="1496.2" cy="879.2" r="8.8"/>
<circle cx="1521.5" cy="872.2" r="8.8"/>
<circle cx="1521.5" cy="860.8" r="8.8"/>
<circle cx="1538.1" cy="827.3" r="8.8"/>
<circle cx="1539.9" cy="843.4" r="8.8"/>
<circle cx="1533.7" cy="838.1" r="8.8"/>
<circle cx="1551.2" cy="839.9" r="8.8"/>
<circle cx="1561.7" cy="838.1" r="8.8"/>
<circle cx="1594.9" cy="779.5" r="8.8"/>
<circle cx="1608.0" cy="780.4" r="8.8"/>
<circle cx="1612.4" cy="765.6" r="8.8"/>
<circle cx="1620.3" cy="761.2" r="8.8"/>
<circle cx="1611.5" cy="761.0" r="8.8"/>
<circle cx="1639.5" cy="759.4" r="8.8"/>
<circle cx="1634.3" cy="743.7" r="8.8"/>
<circle cx="1645.6" cy="744.6" r="8.8"/>
<circle cx="1639.5" cy="737.6" r="8.8"/>
<circle cx="1651.7" cy="742.0" r="8.8"/>
<circle cx="1658.7" cy="732.3" r="8.8"/>
<circle cx="1658.7" cy="721.9" r="8.8"/>
<circle cx="1660.5" cy="707.9" r="8.8"/>
<circle cx="1678.8" cy="707.9" r="8.8"/>
<circle cx="1681.5" cy="716.6" r="8.8"/>
<circle cx="1689.2" cy="692.4" r="8.8"/>
<circle cx="1692.7" cy="675.8" r="8.8"/>
<circle cx="1680.4" cy="684.5" r="8.8"/>
<circle cx="1701.4" cy="682.8" r="8.8"/>
<circle cx="1718.0" cy="658.3" r="8.8"/>
<circle cx="1713.6" cy="667.1" r="8.8"/>
<circle cx="1724.1" cy="669.7" r="8.8"/>
<circle cx="1734.6" cy="641.7" r="8.8"/>
<circle cx="1752.1" cy="640.8" r="8.8"/>
<circle cx="1754.7" cy="633.8" r="8.8"/>
<circle cx="1747.7" cy="619.0" r="8.8"/>
<circle cx="1763.5" cy="616.4" r="8.8"/>
<circle cx="1777.4" cy="616.4" r="8.8"/>
<circle cx="1788.8" cy="599.8" r="8.8"/>
<circle cx="1795.8" cy="575.3" r="8.8"/>
<circle cx="1807.2" cy="570.9" r="8.8"/>
<circle cx="1821.2" cy="562.2" r="8.8"/>
<circle cx="1822.9" cy="557.8" r="8.8"/>
<circle cx="1808.9" cy="542.9" r="8.8"/>
<circle cx="1821.2" cy="542.9" r="8.8"/>
<circle cx="1836.9" cy="547.3" r="8.8"/>
<circle cx="1842.1" cy="538.6" r="8.8"/>
<circle cx="1849.1" cy="516.7" r="8.8"/>
<circle cx="1864.9" cy="507.1" r="8.8"/>
<circle cx="1879.7" cy="505.3" r="8.8"/>
<circle cx="1886.7" cy="488.7" r="8.8"/>
<circle cx="1897.2" cy="495.7" r="8.8"/>
<circle cx="1877.8" cy="475.0" r="8.8"/>
<circle cx="1889.2" cy="485.5" r="8.8"/>
<circle cx="1897.9" cy="476.8" r="8.8"/>
<circle cx="1904.9" cy="469.8" r="8.8"/>
<circle cx="1902.3" cy="457.6" r="8.8"/>
<circle cx="1911.9" cy="449.7" r="8.8"/>
<circle cx="1922.4" cy="462.8" r="8.8"/>
<circle cx="1924.1" cy="474.2" r="8.8"/>
<circle cx="1925.9" cy="440.1" r="8.8"/>
<circle cx="1930.2" cy="449.7" r="8.8"/>
<circle cx="1935.5" cy="438.3" r="8.8"/>
<circle cx="1941.6" cy="443.6" r="8.8"/>
<circle cx="1948.6" cy="428.7" r="8.8"/>
<circle cx="1950.3" cy="420.0" r="8.8"/>
<circle cx="1956.5" cy="432.2" r="8.8"/>
<circle cx="1960.0" cy="413.8" r="8.8"/>
<circle cx="1969.6" cy="377.1" r="8.8"/>
<circle cx="1975.7" cy="391.1" r="8.8"/>
<circle cx="1990.6" cy="378.9" r="8.8"/>
<circle cx="1999.3" cy="371.0" r="8.8"/>
<circle cx="1995.7" cy="381.7" r="8.8"/>
<circle cx="2015.9" cy="375.4" r="8.8"/>
<circle cx="2015.9" cy="357.0" r="8.8"/>
<circle cx="2017.7" cy="339.5" r="8.8"/>
<circle cx="2017.7" cy="364.9" r="8.8"/>
<circle cx="2029.9" cy="350.0" r="8.8"/>
<circle cx="2039.5" cy="335.2" r="8.8"/>
<circle cx="2050.0" cy="343.9" r="8.8"/>
<circle cx="2040.4" cy="317.7" r="8.8"/>
<circle cx="2052.6" cy="319.4" r="8.8"/>
<circle cx="2042.1" cy="302.8" r="8.8"/>
<circle cx="2051.7" cy="299.3" r="8.8"/>
<circle cx="2056.1" cy="309.8" r="8.8"/>
<circle cx="2064.0" cy="300.2" r="8.8"/>
<circle cx="2075.3" cy="313.3" r="8.8"/>
<circle cx="2085.8" cy="287.1" r="8.8"/>
<circle cx="2084.0" cy="260.2" r="8.8"/>
<circle cx="2088.4" cy="272.5" r="8.8"/>
<circle cx="2080.5" cy="276.0" r="8.8"/>
<circle cx="2101.5" cy="269.9" r="8.8"/>
<circle cx="2100.6" cy="279.5" r="8.8"/>
<circle cx="2105.9" cy="297.8" r="8.8"/>
<circle cx="2109.4" cy="261.1" r="8.8"/>
<circle cx="2110.2" cy="240.1" r="8.8"/>
<circle cx="2114.6" cy="250.6" r="8.8"/>
<circle cx="2125.1" cy="252.4" r="8.8"/>
<circle cx="2122.5" cy="225.3" r="8.8"/>
<circle cx="2133.0" cy="227.0" r="8.8"/>
<circle cx="2129.5" cy="209.5" r="8.8"/>
<circle cx="2145.2" cy="196.4" r="8.8"/>
<circle cx="2144.3" cy="213.9" r="8.8"/>
<circle cx="2147.8" cy="231.4" r="8.8"/>
<circle cx="2147.8" cy="243.6" r="8.8"/>
<circle cx="2144.3" cy="250.6" r="8.8"/>
<circle cx="2157.4" cy="205.2" r="8.8"/>
<circle cx="2158.3" cy="225.3" r="8.8"/>
<circle cx="2172.3" cy="213.9" r="8.8"/>
<circle cx="2181.9" cy="201.7" r="8.8"/>
<circle cx="2161.8" cy="181.6" r="8.8"/>
<circle cx="2167.1" cy="185.9" r="8.8"/>
<circle cx="2170.6" cy="174.6" r="8.8"/>
<circle cx="2179.3" cy="175.5" r="8.8"/>
<circle cx="2192.4" cy="187.7" r="8.8"/>
<circle cx="2196.8" cy="173.7" r="8.8"/>
<circle cx="2203.8" cy="165.8" r="8.8"/>
<circle cx="2206.4" cy="159.7" r="8.8"/>
<circle cx="2218.6" cy="163.2" r="8.8"/>
<circle cx="2214.3" cy="182.4" r="8.8"/>
</g>
</svg>
<svg class="a" style="left:0;top:0" width="2454" height="1592">
<rect x="2382" y="57" width="52" height="1467" fill="#000"/>
<rect x="2382" y="57" width="1.3" height="1467" fill="#fff"/><rect x="2432.7" y="57" width="1.3" height="1467" fill="#fff"/><rect x="2382" y="1522.7" width="52" height="1.3" fill="#fff"/>
<rect x="2394" y="67.75" width="10" height="1.5" fill="#fff"/>
<rect x="2394" y="77.75" width="28" height="1.5" fill="#fff"/>
<rect x="2394" y="87.75" width="28" height="1.5" fill="#fff"/>
<rect x="2394" y="97.75" width="28" height="1.5" fill="#fff"/>
<rect x="2394" y="107.75" width="28" height="1.5" fill="#fff"/>
<rect x="2394" y="117.75" width="28" height="1.5" fill="#fff"/>
<rect x="2394" y="127.75" width="28" height="1.5" fill="#fff"/>
<rect x="2394" y="137.75" width="28" height="1.5" fill="#fff"/>
<rect x="2394" y="147.75" width="28" height="1.5" fill="#fff"/>
<rect x="2394" y="157.75" width="28" height="1.5" fill="#fff"/>
<rect x="2394" y="167.75" width="28" height="1.5" fill="#fff"/>
<rect x="2394" y="177.75" width="28" height="1.5" fill="#fff"/>
<rect x="2394" y="187.75" width="28" height="1.5" fill="#fff"/>
<rect x="2394" y="197.75" width="28" height="1.5" fill="#fff"/>
<rect x="2394" y="207.75" width="28" height="1.5" fill="#fff"/>
<rect x="2394" y="217.75" width="28" height="1.5" fill="#fff"/>
<rect x="2394" y="227.75" width="28" height="1.5" fill="#fff"/>
<rect x="2394" y="237.75" width="28" height="1.5" fill="#fff"/>
<rect x="2394" y="247.75" width="28" height="1.5" fill="#fff"/>
<rect x="2394" y="257.75" width="28" height="1.5" fill="#fff"/>
<rect x="2394" y="267.75" width="28" height="1.5" fill="#fff"/>
<rect x="2394" y="277.75" width="28" height="1.5" fill="#fff"/>
<rect x="2394" y="287.75" width="28" height="1.5" fill="#fff"/>
<rect x="2394" y="297.75" width="28" height="1.5" fill="#fff"/>
<rect x="2394" y="307.75" width="28" height="1.5" fill="#fff"/>
<rect x="2394" y="317.75" width="28" height="1.5" fill="#fff"/>
<rect x="2394" y="327.75" width="28" height="1.5" fill="#fff"/>
<rect x="2394" y="337.75" width="28" height="1.5" fill="#fff"/>
<rect x="2394" y="347.75" width="28" height="1.5" fill="#fff"/>
<rect x="2394" y="357.75" width="28" height="1.5" fill="#fff"/>
<rect x="2394" y="367.75" width="28" height="1.5" fill="#fff"/>
<rect x="2394" y="377.75" width="28" height="1.5" fill="#fff"/>
<rect x="2394" y="387.75" width="28" height="1.5" fill="#fff"/>
<rect x="2394" y="397.75" width="28" height="1.5" fill="#fff"/>
<rect x="2394" y="407.75" width="28" height="1.5" fill="#fff"/>
<rect x="2394" y="417.75" width="28" height="1.5" fill="#fff"/>
<rect x="2394" y="427.75" width="28" height="1.5" fill="#fff"/>
<rect x="2394" y="437.75" width="28" height="1.5" fill="#fff"/>
<rect x="2394" y="447.75" width="28" height="1.5" fill="#fff"/>
<rect x="2394" y="457.75" width="28" height="1.5" fill="#fff"/>
<rect x="2394" y="467.75" width="28" height="1.5" fill="#fff"/>
<rect x="2394" y="477.75" width="28" height="1.5" fill="#fff"/>
<rect x="2394" y="487.75" width="28" height="1.5" fill="#fff"/>
<rect x="2394" y="497.75" width="28" height="1.5" fill="#fff"/>
<rect x="2394" y="507.75" width="28" height="1.5" fill="#fff"/>
<rect x="2394" y="517.75" width="28" height="1.5" fill="#fff"/>
<rect x="2394" y="527.75" width="28" height="1.5" fill="#fff"/>
<rect x="2394" y="537.75" width="28" height="1.5" fill="#fff"/>
<rect x="2394" y="547.75" width="28" height="1.5" fill="#fff"/>
<rect x="2394" y="557.75" width="28" height="1.5" fill="#fff"/>
<rect x="2394" y="567.75" width="28" height="1.5" fill="#fff"/>
<rect x="2394" y="577.75" width="28" height="1.5" fill="#fff"/>
<rect x="2394" y="587.75" width="28" height="1.5" fill="#fff"/>
<rect x="2394" y="597.75" width="28" height="1.5" fill="#fff"/>
<rect x="2394" y="607.75" width="28" height="1.5" fill="#fff"/>
<rect x="2394" y="617.75" width="28" height="1.5" fill="#fff"/>
<rect x="2394" y="627.75" width="28" height="1.5" fill="#fff"/>
<rect x="2394" y="637.75" width="28" height="1.5" fill="#fff"/>
<rect x="2394" y="647.75" width="28" height="1.5" fill="#fff"/>
<rect x="2394" y="657.75" width="28" height="1.5" fill="#fff"/>
<rect x="2394" y="667.75" width="28" height="1.5" fill="#fff"/>
<rect x="2394" y="677.75" width="28" height="1.5" fill="#fff"/>
<rect x="2394" y="687.75" width="28" height="1.5" fill="#fff"/>
<rect x="2394" y="697.75" width="28" height="1.5" fill="#fff"/>
<rect x="2394" y="707.75" width="28" height="1.5" fill="#fff"/>
<rect x="2394" y="717.75" width="28" height="1.5" fill="#fff"/>
<rect x="2394" y="727.75" width="28" height="1.5" fill="#fff"/>
<rect x="2394" y="737.75" width="28" height="1.5" fill="#fff"/>
<rect x="2394" y="747.75" width="28" height="1.5" fill="#fff"/>
<rect x="2394" y="757.75" width="28" height="1.5" fill="#fff"/>
<rect x="2394" y="767.75" width="28" height="1.5" fill="#fff"/>
<rect x="2394" y="777.75" width="28" height="1.5" fill="#fff"/>
<rect x="2394" y="787.75" width="28" height="1.5" fill="#fff"/>
<rect x="2394" y="797.75" width="28" height="1.5" fill="#fff"/>
<rect x="2394" y="807.75" width="28" height="1.5" fill="#fff"/>
<rect x="2394" y="817.75" width="28" height="1.5" fill="#fff"/>
<rect x="2394" y="827.75" width="28" height="1.5" fill="#fff"/>
<rect x="2394" y="837.75" width="28" height="1.5" fill="#fff"/>
<rect x="2394" y="847.75" width="28" height="1.5" fill="#fff"/>
<rect x="2394" y="857.75" width="28" height="1.5" fill="#fff"/>
<rect x="2394" y="867.75" width="28" height="1.5" fill="#fff"/>
<rect x="2394" y="877.75" width="28" height="1.5" fill="#fff"/>
<rect x="2394" y="887.75" width="28" height="1.5" fill="#fff"/>
<rect x="2394" y="897.75" width="28" height="1.5" fill="#fff"/>
<rect x="2394" y="907.75" width="28" height="1.5" fill="#fff"/>
<rect x="2394" y="917.75" width="28" height="1.5" fill="#fff"/>
<rect x="2394" y="927.75" width="28" height="1.5" fill="#fff"/>
<rect x="2394" y="937.75" width="28" height="1.5" fill="#fff"/>
<rect x="2394" y="947.75" width="28" height="1.5" fill="#fff"/>
<rect x="2394" y="957.75" width="28" height="1.5" fill="#fff"/>
<rect x="2394" y="967.75" width="28" height="1.5" fill="#fff"/>
<rect x="2394" y="977.75" width="28" height="1.5" fill="#fff"/>
<rect x="2394" y="987.75" width="28" height="1.5" fill="#fff"/>
<rect x="2394" y="997.75" width="28" height="1.5" fill="#fff"/>
<rect x="2394" y="1007.75" width="28" height="1.5" fill="#fff"/>
<rect x="2394" y="1017.75" width="28" height="1.5" fill="#fff"/>
<rect x="2394" y="1027.75" width="28" height="1.5" fill="#fff"/>
<rect x="2394" y="1037.75" width="28" height="1.5" fill="#fff"/>
<rect x="2394" y="1047.75" width="28" height="1.5" fill="#fff"/>
<rect x="2394" y="1057.75" width="28" height="1.5" fill="#fff"/>
<rect x="2394" y="1067.75" width="28" height="1.5" fill="#fff"/>
<rect x="2394" y="1077.75" width="28" height="1.5" fill="#fff"/>
<rect x="2394" y="1087.75" width="28" height="1.5" fill="#fff"/>
<rect x="2394" y="1097.75" width="28" height="1.5" fill="#fff"/>
<rect x="2394" y="1107.75" width="28" height="1.5" fill="#fff"/>
<rect x="2394" y="1117.75" width="28" height="1.5" fill="#fff"/>
<rect x="2394" y="1127.75" width="28" height="1.5" fill="#fff"/>
<rect x="2394" y="1137.75" width="28" height="1.5" fill="#fff"/>
<rect x="2394" y="1147.75" width="28" height="1.5" fill="#fff"/>
<rect x="2394" y="1157.75" width="28" height="1.5" fill="#fff"/>
<rect x="2394" y="1167.75" width="28" height="1.5" fill="#fff"/>
<rect x="2394" y="1177.75" width="28" height="1.5" fill="#fff"/>
<rect x="2394" y="1187.75" width="28" height="1.5" fill="#fff"/>
<rect x="2394" y="1197.75" width="28" height="1.5" fill="#fff"/>
<rect x="2394" y="1207.75" width="28" height="1.5" fill="#fff"/>
<rect x="2394" y="1217.75" width="28" height="1.5" fill="#fff"/>
<rect x="2394" y="1227.75" width="28" height="1.5" fill="#fff"/>
<rect x="2394" y="1237.75" width="28" height="1.5" fill="#fff"/>
<rect x="2394" y="1247.75" width="28" height="1.5" fill="#fff"/>
<rect x="2394" y="1257.75" width="28" height="1.5" fill="#fff"/>
<rect x="2394" y="1267.75" width="28" height="1.5" fill="#fff"/>
<rect x="2394" y="1277.75" width="28" height="1.5" fill="#fff"/>
<rect x="2394" y="1287.75" width="28" height="1.5" fill="#fff"/>
<rect x="2394" y="1297.75" width="28" height="1.5" fill="#fff"/>
<rect x="2394" y="1307.75" width="28" height="1.5" fill="#fff"/>
<rect x="2394" y="1317.75" width="28" height="1.5" fill="#fff"/>
<rect x="2394" y="1327.75" width="28" height="1.5" fill="#fff"/>
<rect x="2394" y="1337.75" width="28" height="1.5" fill="#fff"/>
<rect x="2394" y="1347.75" width="28" height="1.5" fill="#fff"/>
<rect x="2394" y="1357.75" width="28" height="1.5" fill="#fff"/>
<rect x="2394" y="1367.75" width="28" height="1.5" fill="#fff"/>
<rect x="2394" y="1377.75" width="28" height="1.5" fill="#fff"/>
<rect x="2394" y="1387.75" width="28" height="1.5" fill="#fff"/>
<rect x="2394" y="1397.75" width="28" height="1.5" fill="#fff"/>
<rect x="2394" y="1407.75" width="28" height="1.5" fill="#fff"/>
<rect x="2394" y="1417.75" width="28" height="1.5" fill="#fff"/>
<rect x="2394" y="1427.75" width="28" height="1.5" fill="#fff"/>
<rect x="2394" y="1437.75" width="28" height="1.5" fill="#fff"/>
<rect x="2394" y="1447.75" width="28" height="1.5" fill="#fff"/>
<rect x="2394" y="1457.75" width="28" height="1.5" fill="#fff"/>
<rect x="2394" y="1467.75" width="28" height="1.5" fill="#fff"/>
<rect x="2394" y="1477.75" width="28" height="1.5" fill="#fff"/>
<rect x="2394" y="1487.75" width="28" height="1.5" fill="#fff"/>
<rect x="2394" y="1497.75" width="28" height="1.5" fill="#fff"/>
<rect x="2394" y="1507.75" width="10" height="1.5" fill="#fff"/>
<path d="M2405 68 L2413 60 L2413 64 L2428 64 L2428 72 L2413 72 L2413 76 Z" fill="#f2f2f2"/>
<path d="M2405 1508 L2413 1500 L2413 1504 L2428 1504 L2428 1512 L2413 1512 L2413 1516 Z" fill="#f2f2f2"/>
<rect x="890" y="1538" width="1476" height="48" fill="#000"/>
<rect x="890" y="1538" width="1476" height="1.3" fill="#fff"/><rect x="890" y="1538" width="1.3" height="48" fill="#fff"/><rect x="2364.7" y="1538" width="1.3" height="48" fill="#fff"/>
<rect x="901.75" y="1550" width="1.5" height="10" fill="#fff"/>
<rect x="911.75" y="1550" width="1.5" height="28" fill="#fff"/>
<rect x="921.75" y="1550" width="1.5" height="28" fill="#fff"/>
<rect x="931.75" y="1550" width="1.5" height="28" fill="#fff"/>
<rect x="941.75" y="1550" width="1.5" height="28" fill="#fff"/>
<rect x="951.75" y="1550" width="1.5" height="28" fill="#fff"/>
<rect x="961.75" y="1550" width="1.5" height="28" fill="#fff"/>
<rect x="971.75" y="1550" width="1.5" height="28" fill="#fff"/>
<rect x="981.75" y="1550" width="1.5" height="28" fill="#fff"/>
<rect x="991.75" y="1550" width="1.5" height="28" fill="#fff"/>
<rect x="1001.75" y="1550" width="1.5" height="28" fill="#fff"/>
<rect x="1011.75" y="1550" width="1.5" height="28" fill="#fff"/>
<rect x="1021.75" y="1550" width="1.5" height="28" fill="#fff"/>
<rect x="1031.75" y="1550" width="1.5" height="28" fill="#fff"/>
<rect x="1041.75" y="1550" width="1.5" height="28" fill="#fff"/>
<rect x="1051.75" y="1550" width="1.5" height="28" fill="#fff"/>
<rect x="1061.75" y="1550" width="1.5" height="28" fill="#fff"/>
<rect x="1071.75" y="1550" width="1.5" height="28" fill="#fff"/>
<rect x="1081.75" y="1550" width="1.5" height="28" fill="#fff"/>
<rect x="1091.75" y="1550" width="1.5" height="28" fill="#fff"/>
<rect x="1101.75" y="1550" width="1.5" height="28" fill="#fff"/>
<rect x="1111.75" y="1550" width="1.5" height="28" fill="#fff"/>
<rect x="1121.75" y="1550" width="1.5" height="28" fill="#fff"/>
<rect x="1131.75" y="1550" width="1.5" height="28" fill="#fff"/>
<rect x="1141.75" y="1550" width="1.5" height="28" fill="#fff"/>
<rect x="1151.75" y="1550" width="1.5" height="28" fill="#fff"/>
<rect x="1161.75" y="1550" width="1.5" height="28" fill="#fff"/>
<rect x="1171.75" y="1550" width="1.5" height="28" fill="#fff"/>
<rect x="1181.75" y="1550" width="1.5" height="28" fill="#fff"/>
<rect x="1191.75" y="1550" width="1.5" height="28" fill="#fff"/>
<rect x="1201.75" y="1550" width="1.5" height="28" fill="#fff"/>
<rect x="1211.75" y="1550" width="1.5" height="28" fill="#fff"/>
<rect x="1221.75" y="1550" width="1.5" height="28" fill="#fff"/>
<rect x="1231.75" y="1550" width="1.5" height="28" fill="#fff"/>
<rect x="1241.75" y="1550" width="1.5" height="28" fill="#fff"/>
<rect x="1251.75" y="1550" width="1.5" height="28" fill="#fff"/>
<rect x="1261.75" y="1550" width="1.5" height="28" fill="#fff"/>
<rect x="1271.75" y="1550" width="1.5" height="28" fill="#fff"/>
<rect x="1281.75" y="1550" width="1.5" height="28" fill="#fff"/>
<rect x="1291.75" y="1550" width="1.5" height="28" fill="#fff"/>
<rect x="1301.75" y="1550" width="1.5" height="28" fill="#fff"/>
<rect x="1311.75" y="1550" width="1.5" height="28" fill="#fff"/>
<rect x="1321.75" y="1550" width="1.5" height="28" fill="#fff"/>
<rect x="1331.75" y="1550" width="1.5" height="28" fill="#fff"/>
<rect x="1341.75" y="1550" width="1.5" height="28" fill="#fff"/>
<rect x="1351.75" y="1550" width="1.5" height="28" fill="#fff"/>
<rect x="1361.75" y="1550" width="1.5" height="28" fill="#fff"/>
<rect x="1371.75" y="1550" width="1.5" height="28" fill="#fff"/>
<rect x="1381.75" y="1550" width="1.5" height="28" fill="#fff"/>
<rect x="1391.75" y="1550" width="1.5" height="28" fill="#fff"/>
<rect x="1401.75" y="1550" width="1.5" height="28" fill="#fff"/>
<rect x="1411.75" y="1550" width="1.5" height="28" fill="#fff"/>
<rect x="1421.75" y="1550" width="1.5" height="28" fill="#fff"/>
<rect x="1431.75" y="1550" width="1.5" height="28" fill="#fff"/>
<rect x="1441.75" y="1550" width="1.5" height="28" fill="#fff"/>
<rect x="1451.75" y="1550" width="1.5" height="28" fill="#fff"/>
<rect x="1461.75" y="1550" width="1.5" height="28" fill="#fff"/>
<rect x="1471.75" y="1550" width="1.5" height="28" fill="#fff"/>
<rect x="1481.75" y="1550" width="1.5" height="28" fill="#fff"/>
<rect x="1491.75" y="1550" width="1.5" height="28" fill="#fff"/>
<rect x="1501.75" y="1550" width="1.5" height="28" fill="#fff"/>
<rect x="1511.75" y="1550" width="1.5" height="28" fill="#fff"/>
<rect x="1521.75" y="1550" width="1.5" height="28" fill="#fff"/>
<rect x="1531.75" y="1550" width="1.5" height="28" fill="#fff"/>
<rect x="1541.75" y="1550" width="1.5" height="28" fill="#fff"/>
<rect x="1551.75" y="1550" width="1.5" height="28" fill="#fff"/>
<rect x="1561.75" y="1550" width="1.5" height="28" fill="#fff"/>
<rect x="1571.75" y="1550" width="1.5" height="28" fill="#fff"/>
<rect x="1581.75" y="1550" width="1.5" height="28" fill="#fff"/>
<rect x="1591.75" y="1550" width="1.5" height="28" fill="#fff"/>
<rect x="1601.75" y="1550" width="1.5" height="28" fill="#fff"/>
<rect x="1611.75" y="1550" width="1.5" height="28" fill="#fff"/>
<rect x="1621.75" y="1550" width="1.5" height="28" fill="#fff"/>
<rect x="1631.75" y="1550" width="1.5" height="28" fill="#fff"/>
<rect x="1641.75" y="1550" width="1.5" height="28" fill="#fff"/>
<rect x="1651.75" y="1550" width="1.5" height="28" fill="#fff"/>
<rect x="1661.75" y="1550" width="1.5" height="28" fill="#fff"/>
<rect x="1671.75" y="1550" width="1.5" height="28" fill="#fff"/>
<rect x="1681.75" y="1550" width="1.5" height="28" fill="#fff"/>
<rect x="1691.75" y="1550" width="1.5" height="28" fill="#fff"/>
<rect x="1701.75" y="1550" width="1.5" height="28" fill="#fff"/>
<rect x="1711.75" y="1550" width="1.5" height="28" fill="#fff"/>
<rect x="1721.75" y="1550" width="1.5" height="28" fill="#fff"/>
<rect x="1731.75" y="1550" width="1.5" height="28" fill="#fff"/>
<rect x="1741.75" y="1550" width="1.5" height="28" fill="#fff"/>
<rect x="1751.75" y="1550" width="1.5" height="28" fill="#fff"/>
<rect x="1761.75" y="1550" width="1.5" height="28" fill="#fff"/>
<rect x="1771.75" y="1550" width="1.5" height="28" fill="#fff"/>
<rect x="1781.75" y="1550" width="1.5" height="28" fill="#fff"/>
<rect x="1791.75" y="1550" width="1.5" height="28" fill="#fff"/>
<rect x="1801.75" y="1550" width="1.5" height="28" fill="#fff"/>
<rect x="1811.75" y="1550" width="1.5" height="28" fill="#fff"/>
<rect x="1821.75" y="1550" width="1.5" height="28" fill="#fff"/>
<rect x="1831.75" y="1550" width="1.5" height="28" fill="#fff"/>
<rect x="1841.75" y="1550" width="1.5" height="28" fill="#fff"/>
<rect x="1851.75" y="1550" width="1.5" height="28" fill="#fff"/>
<rect x="1861.75" y="1550" width="1.5" height="28" fill="#fff"/>
<rect x="1871.75" y="1550" width="1.5" height="28" fill="#fff"/>
<rect x="1881.75" y="1550" width="1.5" height="28" fill="#fff"/>
<rect x="1891.75" y="1550" width="1.5" height="28" fill="#fff"/>
<rect x="1901.75" y="1550" width="1.5" height="28" fill="#fff"/>
<rect x="1911.75" y="1550" width="1.5" height="28" fill="#fff"/>
<rect x="1921.75" y="1550" width="1.5" height="28" fill="#fff"/>
<rect x="1931.75" y="1550" width="1.5" height="28" fill="#fff"/>
<rect x="1941.75" y="1550" width="1.5" height="28" fill="#fff"/>
<rect x="1951.75" y="1550" width="1.5" height="28" fill="#fff"/>
<rect x="1961.75" y="1550" width="1.5" height="28" fill="#fff"/>
<rect x="1971.75" y="1550" width="1.5" height="28" fill="#fff"/>
<rect x="1981.75" y="1550" width="1.5" height="28" fill="#fff"/>
<rect x="1991.75" y="1550" width="1.5" height="28" fill="#fff"/>
<rect x="2001.75" y="1550" width="1.5" height="28" fill="#fff"/>
<rect x="2011.75" y="1550" width="1.5" height="28" fill="#fff"/>
<rect x="2021.75" y="1550" width="1.5" height="28" fill="#fff"/>
<rect x="2031.75" y="1550" width="1.5" height="28" fill="#fff"/>
<rect x="2041.75" y="1550" width="1.5" height="28" fill="#fff"/>
<rect x="2051.75" y="1550" width="1.5" height="28" fill="#fff"/>
<rect x="2061.75" y="1550" width="1.5" height="28" fill="#fff"/>
<rect x="2071.75" y="1550" width="1.5" height="28" fill="#fff"/>
<rect x="2081.75" y="1550" width="1.5" height="28" fill="#fff"/>
<rect x="2091.75" y="1550" width="1.5" height="28" fill="#fff"/>
<rect x="2101.75" y="1550" width="1.5" height="28" fill="#fff"/>
<rect x="2111.75" y="1550" width="1.5" height="28" fill="#fff"/>
<rect x="2121.75" y="1550" width="1.5" height="28" fill="#fff"/>
<rect x="2131.75" y="1550" width="1.5" height="28" fill="#fff"/>
<rect x="2141.75" y="1550" width="1.5" height="28" fill="#fff"/>
<rect x="2151.75" y="1550" width="1.5" height="28" fill="#fff"/>
<rect x="2161.75" y="1550" width="1.5" height="28" fill="#fff"/>
<rect x="2171.75" y="1550" width="1.5" height="28" fill="#fff"/>
<rect x="2181.75" y="1550" width="1.5" height="28" fill="#fff"/>
<rect x="2191.75" y="1550" width="1.5" height="28" fill="#fff"/>
<rect x="2201.75" y="1550" width="1.5" height="28" fill="#fff"/>
<rect x="2211.75" y="1550" width="1.5" height="28" fill="#fff"/>
<rect x="2221.75" y="1550" width="1.5" height="28" fill="#fff"/>
<rect x="2231.75" y="1550" width="1.5" height="28" fill="#fff"/>
<rect x="2241.75" y="1550" width="1.5" height="28" fill="#fff"/>
<rect x="2251.75" y="1550" width="1.5" height="28" fill="#fff"/>
<rect x="2261.75" y="1550" width="1.5" height="28" fill="#fff"/>
<rect x="2271.75" y="1550" width="1.5" height="28" fill="#fff"/>
<rect x="2281.75" y="1550" width="1.5" height="28" fill="#fff"/>
<rect x="2291.75" y="1550" width="1.5" height="28" fill="#fff"/>
<rect x="2301.75" y="1550" width="1.5" height="28" fill="#fff"/>
<rect x="2311.75" y="1550" width="1.5" height="28" fill="#fff"/>
<rect x="2321.75" y="1550" width="1.5" height="28" fill="#fff"/>
<rect x="2331.75" y="1550" width="1.5" height="28" fill="#fff"/>
<rect x="2341.75" y="1550" width="1.5" height="28" fill="#fff"/>
<rect x="2351.75" y="1550" width="1.5" height="10" fill="#fff"/>
<path d="M902 1561 L910 1569 L906 1569 L906 1584 L898 1584 L898 1569 L894 1569 Z" fill="#ececec"/>
<path d="M2352 1561 L2360 1569 L2356 1569 L2356 1584 L2348 1584 L2348 1569 L2344 1569 Z" fill="#ececec"/>
</svg>
<div class="a" style="left:2452px;top:20px;width:2px;height:1566px;background:#5a5a5a"></div>
<div class="a" style="left:0;top:1585px;width:2454px;height:1px;background:#111"></div>
<div class="a" style="left:0;top:1586px;width:2454px;height:2px;background:#4e4e4e"></div>
<div class="a" style="left:0;top:1588px;width:2454px;height:4px;background:#2a2a2a"></div>
</body></html>
